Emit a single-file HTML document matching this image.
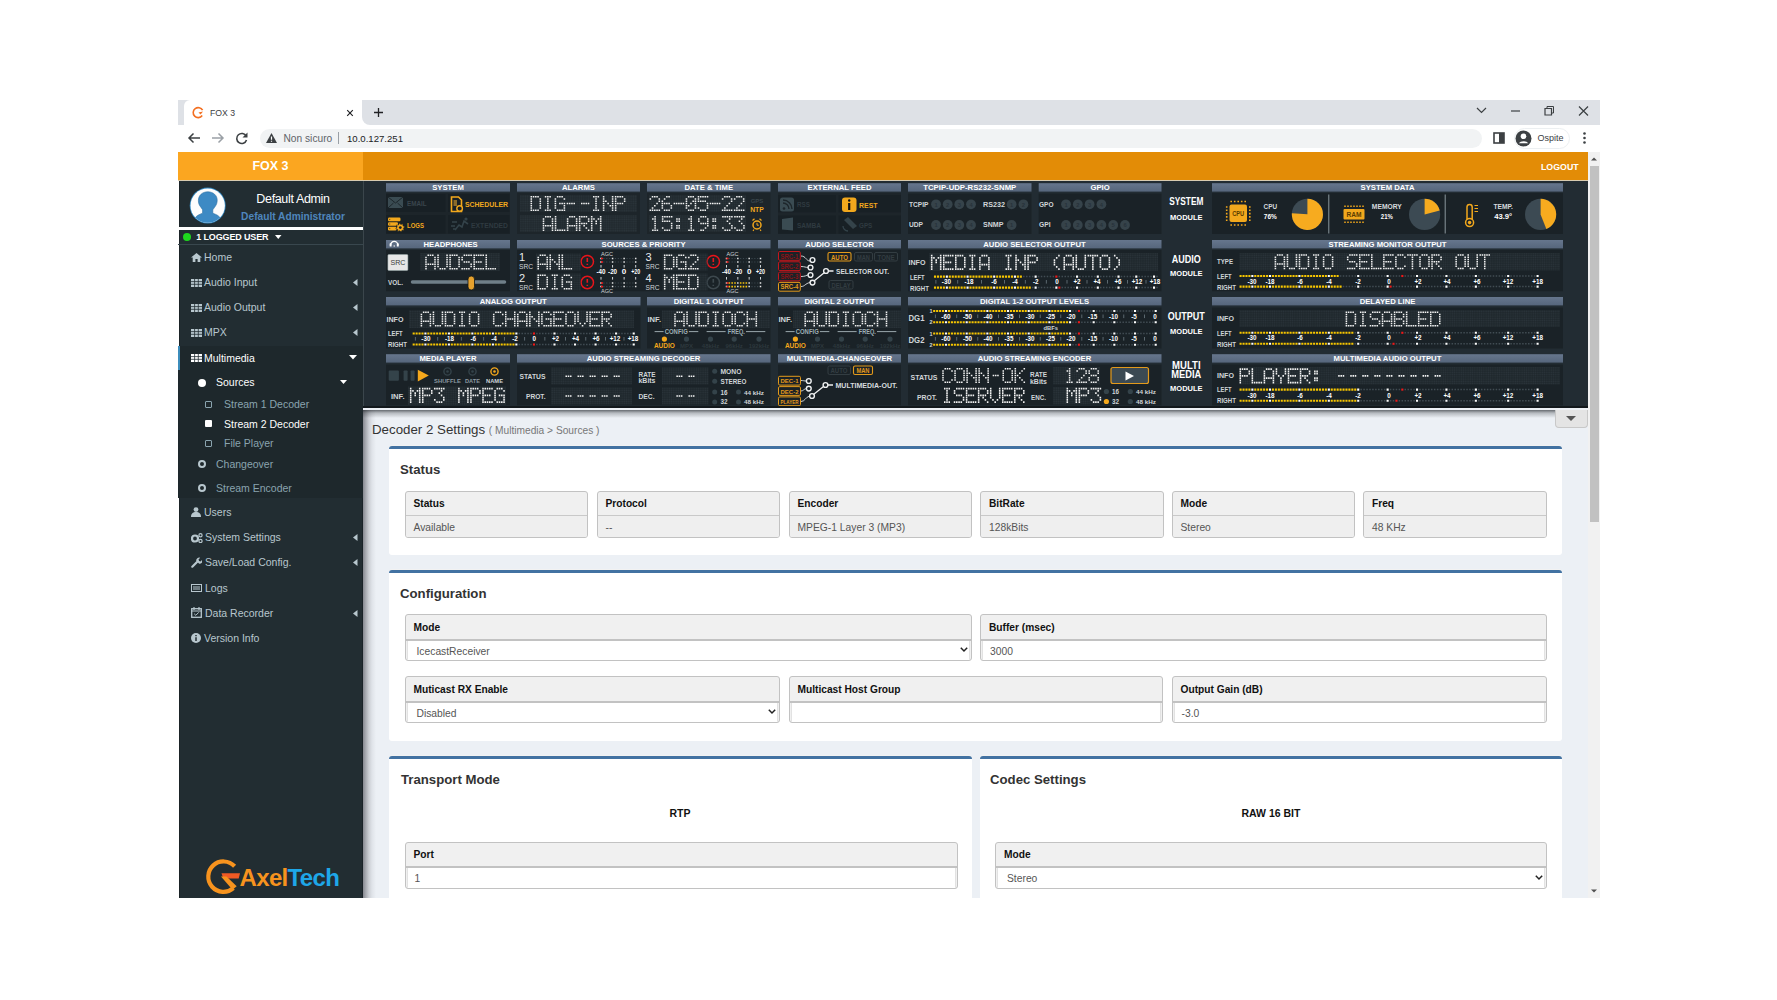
<!DOCTYPE html><html><head><meta charset="utf-8"><title>FOX 3</title><style>
*{box-sizing:border-box;margin:0;padding:0}
html,body{width:1777px;height:1000px;overflow:hidden;background:#fff;font-family:"Liberation Sans",sans-serif;}
.abs{position:absolute}
#tabs{left:178px;top:100px;width:1422px;height:25px;background:#dee1e6}
#tab{left:184px;top:100px;width:178px;height:25px;background:#fff;border-radius:6px 0 0 0}
#toolbar{left:178px;top:125px;width:1422px;height:27px;background:#fff}
#omni{left:260px;top:129px;width:1222px;height:19px;background:#f1f3f4;border-radius:10px}
.chrome-t{font-size:10px;color:#202124;white-space:nowrap}
#logo{left:178px;top:152px;width:185px;height:28px;background:#fba620;color:#fff;font-size:12.5px;text-align:center;line-height:28px}
#nav{left:363px;top:152px;width:1225px;height:28px;background:#e38c06}
#side{left:178.5px;top:180px;width:184.5px;height:718px;background:#222d32;border-left:1.5px solid #1b2327}
#dash{left:363px;top:180px;width:1225px;height:228px;background:#222c33}
#content{left:363px;top:408px;width:1225px;height:490px;background:#ecf0f5}
#scroll{left:1588px;top:152px;width:12px;height:746px;background:#f1f1f1}
.menu{color:#b8c7ce;font-size:10.5px;white-space:nowrap}
.card{background:#fff;border-top:3px solid #4272a2;border-radius:3px;box-shadow:0 -1px 0 #f2f2f2}
.ctitle{font-size:13.2px;font-weight:bold;color:#333;white-space:nowrap}
.fg{border:1px solid #c2c2c2;border-radius:3px;background:#f0f0f0;overflow:hidden}
.fl{height:23px;line-height:23px;font-size:10.2px;font-weight:bold;color:#111;padding-left:8px;border-bottom:1px solid #c9c9c9}
.fv{height:22px;line-height:22px;font-size:10.3px;color:#555;padding-left:8px;background:#efefef}
.fv.w{background:#fff}
</style></head><body><div class="abs" id="tabs"></div><div class="abs" id="tab"></div><div class="abs" id="toolbar"></div><div class="abs" id="omni"></div><svg class="abs" style="left:192px;top:106px" width="13" height="13" viewBox="0 0 13 13"><path d="M10.6 4.2 A5 5 0 1 0 10.2 9.6" fill="none" stroke="#f36f21" stroke-width="1.6"/><path d="M6.5 6.6 L11 5.6 L8.6 8.6Z" fill="#f36f21"/></svg><div class="abs chrome-t" style="left:210px;top:107.5px;font-size:8.7px;color:#3c4043">FOX 3</div><svg class="abs" style="left:345.5px;top:108.5px" width="8" height="8"><path d="M1.2 1.2l5.6 5.6M6.8 1.2l-5.6 5.6" stroke="#202124" stroke-width="1.15"/></svg><div class="abs" style="left:362px;top:115px;width:8px;height:10px;background:#fff"></div><div class="abs" style="left:362px;top:100px;width:12px;height:25px;background:#dee1e6;border-radius:0 0 0 8px"></div><div class="abs" style="left:362px;top:100px;width:6px;height:6px;background:#dee1e6"></div><svg class="abs" style="left:372.5px;top:107px" width="11" height="11"><path d="M5.5 1v9M1 5.5h9" stroke="#202124" stroke-width="1.3"/></svg><svg class="abs" style="left:1475px;top:105px" width="120" height="12"><path d="M2 3l4.5 4.5L11 3" fill="none" stroke="#3c4043" stroke-width="1.2"/><path d="M36 6h9" stroke="#3c4043" stroke-width="1.2"/><path d="M70 3.5h6.5v6.5h-6.5z" fill="none" stroke="#3c4043" stroke-width="1.2"/><path d="M72 3.5v-2h6.5v6.5h-2" fill="none" stroke="#3c4043" stroke-width="1"/><path d="M104 1.5l9 9M113 1.5l-9 9" stroke="#3c4043" stroke-width="1.2"/></svg><svg class="abs" style="left:186px;top:131px" width="64" height="14"><path d="M14 7H3M7.5 2.5L3 7l4.5 4.5" fill="none" stroke="#3c4043" stroke-width="1.5"/><path d="M26 7h11M32.5 2.5L37 7l-4.5 4.5" fill="none" stroke="#9aa0a6" stroke-width="1.5"/><path d="M60.2 5.2A5 5 0 1 0 60.5 9" fill="none" stroke="#3c4043" stroke-width="1.6"/><path d="M61.5 1.5v5h-5z" fill="#3c4043"/></svg><svg class="abs" style="left:265px;top:132px" width="13" height="12"><path d="M6.5 1L12 11H1z" fill="#3c4043"/><path d="M6.5 4.5v3.3M6.5 8.8v1" stroke="#fff" stroke-width="1.2"/></svg><div class="abs chrome-t" style="left:283.5px;top:133px;font-size:10.2px;color:#5f6368">Non sicuro</div><div class="abs" style="left:338px;top:132px;width:1px;height:12px;background:#9aa0a6"></div><div class="abs chrome-t" style="left:347px;top:133px;font-size:9.6px">10.0.127.251</div><svg class="abs" style="left:1493px;top:132px" width="12" height="12"><rect x="1" y="1" width="10" height="10" fill="none" stroke="#3c4043" stroke-width="1.6"/><rect x="6" y="1" width="5" height="10" fill="#3c4043"/></svg><div class="abs" style="left:1514px;top:128px;width:56px;height:21px;border-radius:11px;background:#fff;border:1px solid #eceff1"></div><svg class="abs" style="left:1515px;top:130px" width="17" height="17"><circle cx="8.5" cy="8.5" r="8" fill="#3c4043"/><circle cx="8.5" cy="6.3" r="2.8" fill="#fff"/><path d="M3.7 13.2a5.5 4 0 0 1 9.6 0" fill="#fff"/></svg><div class="abs chrome-t" style="left:1537.5px;top:133px;font-size:9px;color:#3c4043">Ospite</div><svg class="abs" style="left:1582px;top:131px" width="5" height="14"><circle cx="2.5" cy="2.5" r="1.3" fill="#3c4043"/><circle cx="2.5" cy="7" r="1.3" fill="#3c4043"/><circle cx="2.5" cy="11.5" r="1.3" fill="#3c4043"/></svg><div class="abs" id="logo"><b>FOX 3</b></div><div class="abs" id="nav"></div><div class="abs" style="left:1541px;top:161.5px;font-size:8.8px;font-weight:bold;color:#fff">LOGOUT</div><div class="abs" id="scroll"></div><div class="abs" style="left:1590px;top:166px;width:9px;height:356px;background:#c1c1c1"></div><svg class="abs" style="left:1589px;top:154px" width="10" height="10"><path d="M2 6.5l3-3 3 3z" fill="#505050"/></svg><svg class="abs" style="left:1589px;top:886px" width="10" height="10"><path d="M2 3.5l3 3 3-3z" fill="#505050"/></svg><div class="abs" id="side"></div><div class="abs" style="left:361.5px;top:408px;width:1.5px;height:490px;background:#1a2328"></div><div class="abs" style="left:178px;top:227px;width:185px;height:3px;background:#fff"></div><svg class="abs" style="left:188px;top:186px" width="40" height="40" viewBox="188 186 40 40"><defs><clipPath id="avc"><circle cx="207.7" cy="205.6" r="17.2"/></clipPath></defs><circle cx="207.7" cy="205.6" r="18" fill="#2f86c0"/><circle cx="207.7" cy="205.6" r="17.2" fill="#fdfdfd"/><g clip-path="url(#avc)" fill="#3d8ac4" stroke="#2a6fa3" stroke-width="0.6"><path d="M207.8 191.8c-5.4 0-9.4 3.6-9.4 8.6 0 2.4 0.6 4.2 1.6 5.6 0.9 1.3 1.9 2.6 2.6 3.8v3.4c-3.2 1.2-6.6 2.6-8.2 5.6l-1 8h28.6l-1-8c-1.6-3-5-4.4-8.2-5.6v-3.4c0.8-1.2 1.9-2.6 2.8-4 1-1.5 1.6-3.4 1.6-5.6 0-4.8-3.9-8.4-9.4-8.4z"/></g></svg><div class="abs" style="left:238px;top:191.5px;width:110px;text-align:center;font-size:12.5px;letter-spacing:-0.35px;color:#fff">Default Admin</div><div class="abs" style="left:228px;top:210.5px;width:130px;text-align:center;font-size:10.2px;font-weight:bold;color:#4f86bd">Default Administrator</div><div class="abs" style="left:178px;top:244px;width:185px;height:1px;background:#39474e"></div><div class="abs" style="left:183px;top:233px;width:8px;height:8px;border-radius:50%;background:#1ed71e"></div><div class="abs" style="left:196.3px;top:231.7px;font-size:9px;font-weight:bold;letter-spacing:-0.15px;color:#fff;white-space:nowrap">1 LOGGED USER</div><svg class="abs" style="left:274.5px;top:235px" width="8" height="5"><path d="M0 0h6.5L3.25 4z" fill="#fff"/></svg><svg class="abs" style="left:191px;top:252.5px" width="11" height="9"><path d="M5.5 0L11 4.6H9.3V9H6.6V6H4.4v3H1.7V4.6H0z" fill="#b8c7ce"/></svg><div class="abs menu" style="left:204px;top:251.0px">Home</div><svg class="abs" style="left:191px;top:278.5px" width="11" height="8"><path d="M0 0h11v8H0z" fill="#b8c7ce"/><path d="M0 2.6h11M0 5.3h11M3.6 0v8M7.3 0v8" stroke="#222d32" stroke-width="0.8"/></svg><div class="abs menu" style="left:204px;top:276.0px">Audio Input</div><svg class="abs" style="left:353px;top:279.0px" width="5" height="7"><path d="M4.5 0v7L0 3.5z" fill="#b8c7ce"/></svg><svg class="abs" style="left:191px;top:303.5px" width="11" height="8"><path d="M0 0h11v8H0z" fill="#b8c7ce"/><path d="M0 2.6h11M0 5.3h11M3.6 0v8M7.3 0v8" stroke="#222d32" stroke-width="0.8"/></svg><div class="abs menu" style="left:204px;top:301.0px">Audio Output</div><svg class="abs" style="left:353px;top:304.0px" width="5" height="7"><path d="M4.5 0v7L0 3.5z" fill="#b8c7ce"/></svg><svg class="abs" style="left:191px;top:328.5px" width="11" height="8"><path d="M0 0h11v8H0z" fill="#b8c7ce"/><path d="M0 2.6h11M0 5.3h11M3.6 0v8M7.3 0v8" stroke="#222d32" stroke-width="0.8"/></svg><div class="abs menu" style="left:204px;top:326.0px">MPX</div><svg class="abs" style="left:353px;top:329.0px" width="5" height="7"><path d="M4.5 0v7L0 3.5z" fill="#b8c7ce"/></svg><div class="abs" style="left:178px;top:346px;width:185px;height:152px;background:#1e282c"></div><div class="abs" style="left:178px;top:346px;width:2px;height:24px;background:#3c8dbc"></div><svg class="abs" style="left:191px;top:354px" width="11" height="8"><path d="M0 0h11v8H0z" fill="#fff"/><path d="M0 2.6h11M0 5.3h11M3.6 0v8M7.3 0v8" stroke="#222d32" stroke-width="0.8"/></svg><div class="abs menu" style="left:204px;top:351.5px;color:#fff">Multimedia</div><svg class="abs" style="left:349px;top:355px" width="8" height="5"><path d="M0 0h8L4 4.5z" fill="#fff"/></svg><div class="abs" style="left:198px;top:378.5px;width:8px;height:8px;border-radius:50%;background:#fff"></div><div class="abs menu" style="left:216px;top:376px;color:#fff">Sources</div><svg class="abs" style="left:340px;top:380px" width="7" height="4"><path d="M0 0h7L3.5 4z" fill="#fff"/></svg><div class="abs" style="left:205px;top:400.5px;width:7px;height:7px;border:1px solid #8aa4af;border-radius:1px"></div><div class="abs menu" style="left:224px;top:398px;font-size:10.5px;color:#8aa4af">Stream 1 Decoder</div><div class="abs" style="left:205px;top:420.0px;width:7px;height:7px;background:#fff;border-radius:1px"></div><div class="abs menu" style="left:224px;top:417.5px;font-size:10.5px;color:#fff">Stream 2 Decoder</div><div class="abs" style="left:205px;top:439.5px;width:7px;height:7px;border:1px solid #8aa4af;border-radius:1px"></div><div class="abs menu" style="left:224px;top:437px;font-size:10.5px;color:#8aa4af">File Player</div><div class="abs" style="left:198px;top:460px;width:8px;height:8px;border-radius:50%;border:2px solid #b8c7ce"></div><div class="abs menu" style="left:216px;top:457.5px;color:#8aa4af">Changeover</div><div class="abs" style="left:198px;top:484px;width:8px;height:8px;border-radius:50%;border:2px solid #b8c7ce"></div><div class="abs menu" style="left:216px;top:481.5px;color:#8aa4af">Stream Encoder</div><svg class="abs" style="left:191px;top:507px" width="10" height="10"><circle cx="5" cy="2.6" r="2.4" fill="#b8c7ce"/><path d="M0 10c0-3.5 1.8-5 5-5s5 1.5 5 5z" fill="#b8c7ce"/></svg><div class="abs menu" style="left:204px;top:505.5px">Users</div><svg class="abs" style="left:191px;top:532.5px" width="12" height="10"><circle cx="4" cy="5.5" r="3" fill="none" stroke="#b8c7ce" stroke-width="2.2"/><circle cx="9.5" cy="2.3" r="1.6" fill="none" stroke="#b8c7ce" stroke-width="1.2"/><circle cx="9.5" cy="8" r="1.6" fill="none" stroke="#b8c7ce" stroke-width="1.2"/></svg><div class="abs menu" style="left:205px;top:531.0px">System Settings</div><svg class="abs" style="left:353px;top:534.0px" width="5" height="7"><path d="M4.5 0v7L0 3.5z" fill="#b8c7ce"/></svg><svg class="abs" style="left:191px;top:557.0px" width="11" height="11"><path d="M1.3 9.7L6 5" stroke="#b8c7ce" stroke-width="2.2" stroke-linecap="round"/><path d="M5.2 3.8a3 3 0 0 1 4-3.1L7.5 2.5l0.6 1.4 1.4 0.6 1.8-1.7a3 3 0 0 1-3.1 4z" fill="#b8c7ce"/></svg><div class="abs menu" style="left:205px;top:556.0px">Save/Load Config.</div><svg class="abs" style="left:353px;top:559.0px" width="5" height="7"><path d="M4.5 0v7L0 3.5z" fill="#b8c7ce"/></svg><svg class="abs" style="left:191px;top:584px" width="11" height="8"><rect x="0.5" y="0.5" width="10" height="7" fill="none" stroke="#b8c7ce"/><rect x="2" y="2" width="7" height="4" fill="#b8c7ce" opacity="0.5"/></svg><div class="abs menu" style="left:205px;top:581.5px">Logs</div><svg class="abs" style="left:191px;top:607px" width="11" height="11"><rect x="0.7" y="1.7" width="9.6" height="8.6" fill="none" stroke="#b8c7ce" stroke-width="1.3"/><path d="M0.7 4h9.6M3 0v3M8 0v3" stroke="#b8c7ce" stroke-width="1.2"/><path d="M3.2 6.8l1.6 1.5 3-3" fill="none" stroke="#b8c7ce" stroke-width="1"/></svg><div class="abs menu" style="left:205px;top:606.5px">Data Recorder</div><svg class="abs" style="left:353px;top:609.5px" width="5" height="7"><path d="M4.5 0v7L0 3.5z" fill="#b8c7ce"/></svg><svg class="abs" style="left:191px;top:633px" width="10" height="10"><circle cx="5" cy="5" r="5" fill="#b8c7ce"/><path d="M5 4.3v3.8M5 2v1.2" stroke="#222d32" stroke-width="1.5"/></svg><div class="abs menu" style="left:204px;top:631.5px">Version Info</div><svg class="abs" style="left:200px;top:855px" width="45" height="42" viewBox="200 855 45 42"><path d="M234.6 866.3A15.2 15.2 0 1 0 233.4 888.2" fill="none" stroke="#f7931e" stroke-width="4.2"/><path d="M221.5 873.2h18.5l-1.3 5.3h-15.4z" fill="#f15a24"/><path d="M221 876.5h5.5l10.2 9.8-4.2 3.4z" fill="#f7931e"/></svg><div class="abs" style="left:239.5px;top:863.5px;font-size:24px;line-height:28px;font-weight:bold;letter-spacing:-0.65px;white-space:nowrap"><span style="color:#f7931e">Axel</span><span style="color:#1ea7e8">Tech</span></div><div class="abs" id="dash"></div><div class="abs" style="left:362.5px;top:180px;width:1px;height:228px;background:#3b464c"></div><div class="abs" style="left:178px;top:179.5px;width:1410px;height:1px;background:#d8cbb0"></div><svg class="abs" style="left:363px;top:180px" width="1225" height="228" viewBox="363 180 1225 228" font-family="Liberation Sans, sans-serif"><style>.tt{font-size:7.7px;font-weight:bold;fill:#fff}</style><defs><linearGradient id="tg" x1="0" y1="0" x2="0" y2="1"><stop offset="0" stop-color="#66768d"/><stop offset="1" stop-color="#56667c"/></linearGradient><pattern id="lg" x="0" y="0" width="2.25" height="2.25" patternUnits="userSpaceOnUse"><rect x="0.3" y="0.3" width="1.6" height="1.6" fill="#2b353b"/></pattern></defs><rect x="386" y="183.2" width="124" height="8.4" fill="url(#tg)"/><text x="448" y="190.2" text-anchor="middle" class="tt">SYSTEM</text><rect x="386" y="193" width="124" height="41" fill="#1d252a"/><rect x="386" y="194" width="59.5" height="18" fill="#182025"/><rect x="448" y="194" width="61.5" height="18" fill="#182025"/><rect x="386" y="215" width="59.5" height="18.5" fill="#182025"/><rect x="448" y="215" width="61.5" height="18.5" fill="#182025"/><g fill="#3a4b52"><rect x="388" y="197" width="15" height="11"/></g><path d="M388 197l7.5 6 7.5-6M388 208l5.5-5M403 208l-5.5-5" stroke="#1d262b" stroke-width="1" fill="none"/><text x="407" y="206" font-size="6.3" fill="#3a454c" font-weight="bold" text-anchor="start">EMAIL</text><path d="M451.5 197h7l3 3v11.5h-10z" fill="none" stroke="#f2a81d" stroke-width="1.6"/><circle cx="459.6" cy="208.5" r="2.8" fill="#182025" stroke="#f2a81d" stroke-width="1.4"/><rect x="453.5" y="200" width="3.5" height="6" fill="#8a6a2a"/><text x="465" y="206.5" font-size="6.8" fill="#f2a81d" font-weight="bold" text-anchor="start" textLength="43" lengthAdjust="spacingAndGlyphs">SCHEDULER</text><g fill="#f2a81d"><rect x="388" y="217.6" width="12.5" height="3.6" rx="1.2"/><rect x="388" y="222.2" width="10" height="3.6" rx="1.2"/><rect x="388" y="226.8" width="8.5" height="3.6" rx="1.2"/></g><path d="M389.8 219.4h0M389.8 224h0M389.8 228.6h0" stroke="#182025" stroke-width="1" stroke-linecap="round"/><path d="M404.81 226.70L403.44 228.22L404.12 230.16L402.08 230.26L401.20 232.11L399.68 230.74L397.74 231.42L397.64 229.38L395.79 228.50L397.16 226.98L396.48 225.04L398.52 224.94L399.40 223.09L400.92 224.46L402.86 223.78L402.96 225.82Z" fill="#f2a81d" stroke="#182025" stroke-width="0.6"/><circle cx="400.3" cy="227.6" r="1.4" fill="#182025"/><text x="407" y="227.5" font-size="6.8" fill="#f2a81d" font-weight="bold" text-anchor="start" textLength="17" lengthAdjust="spacingAndGlyphs">LOGS</text><path d="M455 230l4-5 3 2 2-6 4 3M452 222h5M451 226h4M453 229h3" stroke="#34434a" stroke-width="1.6" fill="none"/><circle cx="466" cy="219" r="1.6" fill="#34434a"/><text x="471" y="227.5" font-size="6.3" fill="#2f3a40" font-weight="bold" text-anchor="start" textLength="37" lengthAdjust="spacingAndGlyphs">EXTENDED</text><rect x="517" y="183.2" width="123" height="8.4" fill="url(#tg)"/><text x="578.5" y="190.2" text-anchor="middle" class="tt">ALARMS</text><rect x="517" y="193" width="123" height="41" fill="#1d252a"/><rect x="647" y="183.2" width="123.5" height="8.4" fill="url(#tg)"/><text x="708.75" y="190.2" text-anchor="middle" class="tt">DATE &amp; TIME</text><rect x="647" y="193" width="123.5" height="41" fill="#1d252a"/><text x="757" y="203" font-size="6" fill="#3a454c" font-weight="bold" text-anchor="middle">GPS</text><text x="757" y="211.5" font-size="6.8" fill="#f2a81d" font-weight="bold" text-anchor="middle">NTP</text><circle cx="757" cy="225" r="4" fill="none" stroke="#f2a81d" stroke-width="1.5"/><path d="M757 222.8v2.4h1.8" stroke="#f2a81d" stroke-width="1" fill="none"/><path d="M752.5 220.5l2-1.8M761.5 220.5l-2-1.8M754 229.5l-1 1.3M760 229.5l1 1.3" stroke="#f2a81d" stroke-width="1.2"/><rect x="778" y="183.2" width="123" height="8.4" fill="url(#tg)"/><text x="839.5" y="190.2" text-anchor="middle" class="tt">EXTERNAL FEED</text><rect x="778" y="193" width="123" height="41" fill="#1d252a"/><rect x="778" y="195" width="58" height="17.30000000000001" fill="#182025"/><rect x="838.6" y="195" width="62.39999999999998" height="17.30000000000001" fill="#182025"/><rect x="778" y="215.5" width="58" height="18.099999999999994" fill="#182025"/><rect x="838.6" y="215.5" width="62.39999999999998" height="18.099999999999994" fill="#182025"/><rect x="780" y="197.5" width="14" height="14" rx="2.5" fill="#3a4b52"/><path d="M783 203a6 6 0 0 1 6 6M783 200a9 9 0 0 1 9 9" stroke="#1d262b" stroke-width="1.4" fill="none"/><circle cx="784" cy="208.5" r="1.3" fill="#1d262b"/><text x="797" y="207" font-size="6.3" fill="#2f3a40" font-weight="bold" text-anchor="start">RSS</text><rect x="842" y="197.5" width="14.5" height="14.5" rx="3" fill="#f2a81d"/><path d="M849.2 203v7" stroke="#111" stroke-width="2.2"/><circle cx="849.2" cy="200.5" r="1.2" fill="#111"/><text x="859" y="207.5" font-size="6.8" fill="#f2a81d" font-weight="bold" text-anchor="start" textLength="18.5" lengthAdjust="spacingAndGlyphs">REST</text><path d="M782 219l11 -1.5v13l-11-1z" fill="#3a4b52"/><text x="797" y="228" font-size="6.3" fill="#2f3a40" font-weight="bold" text-anchor="start" textLength="24" lengthAdjust="spacingAndGlyphs">SAMBA</text><path d="M844 220l4-3 9 9-4 3z" fill="#34434a"/><path d="M843 226a5 5 0 0 0 5 5" stroke="#34434a" stroke-width="1.3" fill="none"/><text x="859" y="228" font-size="6.3" fill="#2f3a40" font-weight="bold" text-anchor="start">GPS</text><rect x="908" y="183.2" width="123.5" height="8.4" fill="url(#tg)"/><text x="969.75" y="190.2" text-anchor="middle" class="tt" textLength="93" lengthAdjust="spacingAndGlyphs">TCPIP-UDP-RS232-SNMP</text><rect x="908" y="193.5" width="123.5" height="40.5" fill="#1a2227"/><text x="909" y="206.5" font-size="6.6" fill="#d0d5d8" font-weight="bold" text-anchor="start" textLength="19.5" lengthAdjust="spacingAndGlyphs">TCPIP</text><text x="909" y="227.3" font-size="6.6" fill="#d0d5d8" font-weight="bold" text-anchor="start" textLength="14" lengthAdjust="spacingAndGlyphs">UDP</text><text x="983" y="206.5" font-size="6.6" fill="#d0d5d8" font-weight="bold" text-anchor="start" textLength="22" lengthAdjust="spacingAndGlyphs">RS232</text><text x="983" y="227.3" font-size="6.6" fill="#d0d5d8" font-weight="bold" text-anchor="start" textLength="20.5" lengthAdjust="spacingAndGlyphs">SNMP</text><circle cx="936" cy="204.3" r="4.9" fill="#36434a"/><text x="936" y="206.5" font-size="5.8" fill="#27323a" font-weight="bold" text-anchor="middle">1</text><circle cx="947.7" cy="204.3" r="4.9" fill="#36434a"/><text x="947.7" y="206.5" font-size="5.8" fill="#27323a" font-weight="bold" text-anchor="middle">2</text><circle cx="959.3" cy="204.3" r="4.9" fill="#36434a"/><text x="959.3" y="206.5" font-size="5.8" fill="#27323a" font-weight="bold" text-anchor="middle">3</text><circle cx="971" cy="204.3" r="4.9" fill="#36434a"/><text x="971" y="206.5" font-size="5.8" fill="#27323a" font-weight="bold" text-anchor="middle">4</text><circle cx="936" cy="225" r="4.9" fill="#36434a"/><text x="936" y="227.2" font-size="5.8" fill="#27323a" font-weight="bold" text-anchor="middle">1</text><circle cx="947.7" cy="225" r="4.9" fill="#36434a"/><text x="947.7" y="227.2" font-size="5.8" fill="#27323a" font-weight="bold" text-anchor="middle">2</text><circle cx="959.3" cy="225" r="4.9" fill="#36434a"/><text x="959.3" y="227.2" font-size="5.8" fill="#27323a" font-weight="bold" text-anchor="middle">3</text><circle cx="971" cy="225" r="4.9" fill="#36434a"/><text x="971" y="227.2" font-size="5.8" fill="#27323a" font-weight="bold" text-anchor="middle">4</text><circle cx="1011.6" cy="204.3" r="4.9" fill="#36434a"/><text x="1011.6" y="206.5" font-size="5.8" fill="#27323a" font-weight="bold" text-anchor="middle">1</text><circle cx="1023.4" cy="204.3" r="4.9" fill="#36434a"/><text x="1023.4" y="206.5" font-size="5.8" fill="#27323a" font-weight="bold" text-anchor="middle">2</text><circle cx="1011.6" cy="225" r="4.9" fill="#36434a"/><text x="1011.6" y="227.2" font-size="5.8" fill="#27323a" font-weight="bold" text-anchor="middle">1</text><rect x="1038.7" y="183.2" width="122.79999999999995" height="8.4" fill="url(#tg)"/><text x="1100.1" y="190.2" text-anchor="middle" class="tt">GPIO</text><rect x="1038.7" y="193.5" width="122.79999999999995" height="40.5" fill="#1a2227"/><text x="1039" y="206.5" font-size="6.6" fill="#d0d5d8" font-weight="bold" text-anchor="start" textLength="14.5" lengthAdjust="spacingAndGlyphs">GPO</text><text x="1039" y="227.3" font-size="6.6" fill="#d0d5d8" font-weight="bold" text-anchor="start" textLength="11.5" lengthAdjust="spacingAndGlyphs">GPI</text><circle cx="1066" cy="204.3" r="4.9" fill="#36434a"/><text x="1066" y="206.5" font-size="5.8" fill="#27323a" font-weight="bold" text-anchor="middle">1</text><circle cx="1077.8" cy="204.3" r="4.9" fill="#36434a"/><text x="1077.8" y="206.5" font-size="5.8" fill="#27323a" font-weight="bold" text-anchor="middle">2</text><circle cx="1089.6" cy="204.3" r="4.9" fill="#36434a"/><text x="1089.6" y="206.5" font-size="5.8" fill="#27323a" font-weight="bold" text-anchor="middle">3</text><circle cx="1101.4" cy="204.3" r="4.9" fill="#36434a"/><text x="1101.4" y="206.5" font-size="5.8" fill="#27323a" font-weight="bold" text-anchor="middle">4</text><circle cx="1066" cy="225" r="4.9" fill="#36434a"/><text x="1066" y="227.2" font-size="5.8" fill="#27323a" font-weight="bold" text-anchor="middle">1</text><circle cx="1077.8" cy="225" r="4.9" fill="#36434a"/><text x="1077.8" y="227.2" font-size="5.8" fill="#27323a" font-weight="bold" text-anchor="middle">2</text><circle cx="1089.6" cy="225" r="4.9" fill="#36434a"/><text x="1089.6" y="227.2" font-size="5.8" fill="#27323a" font-weight="bold" text-anchor="middle">3</text><circle cx="1101.4" cy="225" r="4.9" fill="#36434a"/><text x="1101.4" y="227.2" font-size="5.8" fill="#27323a" font-weight="bold" text-anchor="middle">4</text><circle cx="1113.2" cy="225" r="4.9" fill="#36434a"/><text x="1113.2" y="227.2" font-size="5.8" fill="#27323a" font-weight="bold" text-anchor="middle">5</text><circle cx="1125" cy="225" r="4.9" fill="#36434a"/><text x="1125" y="227.2" font-size="5.8" fill="#27323a" font-weight="bold" text-anchor="middle">6</text><text x="1186.3" y="205.3" font-size="10" fill="#fff" font-weight="bold" text-anchor="middle" textLength="34" lengthAdjust="spacingAndGlyphs">SYSTEM</text><text x="1186.3" y="219.5" font-size="8" fill="#fff" font-weight="bold" text-anchor="middle" textLength="32.5" lengthAdjust="spacingAndGlyphs">MODULE</text><text x="1186.3" y="262.6" font-size="10" fill="#fff" font-weight="bold" text-anchor="middle" textLength="29" lengthAdjust="spacingAndGlyphs">AUDIO</text><text x="1186.3" y="276.4" font-size="8" fill="#fff" font-weight="bold" text-anchor="middle" textLength="32.5" lengthAdjust="spacingAndGlyphs">MODULE</text><text x="1186.3" y="319.6" font-size="10" fill="#fff" font-weight="bold" text-anchor="middle" textLength="37" lengthAdjust="spacingAndGlyphs">OUTPUT</text><text x="1186.3" y="333.5" font-size="8" fill="#fff" font-weight="bold" text-anchor="middle" textLength="32.5" lengthAdjust="spacingAndGlyphs">MODULE</text><text x="1186.3" y="368.6" font-size="10" fill="#fff" font-weight="bold" text-anchor="middle" textLength="28.5" lengthAdjust="spacingAndGlyphs">MULTI</text><text x="1186.3" y="378" font-size="10" fill="#fff" font-weight="bold" text-anchor="middle" textLength="30" lengthAdjust="spacingAndGlyphs">MEDIA</text><text x="1186.3" y="390.5" font-size="8" fill="#fff" font-weight="bold" text-anchor="middle" textLength="32.5" lengthAdjust="spacingAndGlyphs">MODULE</text><rect x="1212" y="183.2" width="351" height="8.4" fill="url(#tg)"/><text x="1387.5" y="190.2" text-anchor="middle" class="tt">SYSTEM DATA</text><rect x="1212" y="193" width="351" height="41" fill="#1a2227"/><path d="M1328.8 194.5v39M1445.2 194.5v39" stroke="#8a979d" stroke-width="1"/><rect x="1229.5" y="204.5" width="17.5" height="17.5" rx="2" fill="#f2a81d"/><path d="M1231.2 201.5h0M1231.2 225h0M1226.7 207h0M1249.8 207h0M1234.7 201.5h0M1234.7 225h0M1226.7 210.3h0M1249.8 210.3h0M1238.2 201.5h0M1238.2 225h0M1226.7 213.6h0M1249.8 213.6h0M1241.7 201.5h0M1241.7 225h0M1226.7 216.9h0M1249.8 216.9h0M1245.2 201.5h0M1245.2 225h0M1226.7 220.2h0M1249.8 220.2h0" stroke="#f2a81d" stroke-width="1.6" stroke-linecap="square"/><text x="1238.2" y="215.8" font-size="6.3" fill="#5a3b00" font-weight="bold" text-anchor="middle" textLength="12" lengthAdjust="spacingAndGlyphs">CPU</text><text x="1270.3" y="209" font-size="6.8" fill="#d6dbde" font-weight="bold" text-anchor="middle" textLength="13.5" lengthAdjust="spacingAndGlyphs">CPU</text><text x="1270.3" y="219" font-size="6.8" fill="#fff" font-weight="bold" text-anchor="middle" textLength="13" lengthAdjust="spacingAndGlyphs">76%</text><rect x="1343.5" y="209" width="21" height="10.5" rx="1" fill="#f2a81d"/><path d="M1345 206.3h0M1345 222.2h0M1348 206.3h0M1348 222.2h0M1351 206.3h0M1351 222.2h0M1354 206.3h0M1354 222.2h0M1357 206.3h0M1357 222.2h0M1360 206.3h0M1360 222.2h0M1363 206.3h0M1363 222.2h0" stroke="#f2a81d" stroke-width="1.5" stroke-linecap="square"/><text x="1354" y="217" font-size="6.5" fill="#5a3b00" font-weight="bold" text-anchor="middle" textLength="15" lengthAdjust="spacingAndGlyphs">RAM</text><text x="1386.8" y="209" font-size="6.8" fill="#d6dbde" font-weight="bold" text-anchor="middle" textLength="30" lengthAdjust="spacingAndGlyphs">MEMORY</text><text x="1386.8" y="219" font-size="6.8" fill="#fff" font-weight="bold" text-anchor="middle" textLength="12" lengthAdjust="spacingAndGlyphs">21%</text><path d="M1467 219.5v-12.5a2.6 2.6 0 0 1 5.2 0v12.5" fill="none" stroke="#f2a81d" stroke-width="1.5"/><circle cx="1469.6" cy="222.6" r="4" fill="none" stroke="#f2a81d" stroke-width="1.5"/><circle cx="1469.6" cy="222.6" r="1.8" fill="#f2a81d"/><path d="M1474.5 205.5h3.5M1474.5 208.5h3.5M1474.5 211.5h3.5" stroke="#f2a81d" stroke-width="1"/><text x="1503.2" y="209" font-size="6.8" fill="#d6dbde" font-weight="bold" text-anchor="middle" textLength="19.5" lengthAdjust="spacingAndGlyphs">TEMP.</text><text x="1503.2" y="219" font-size="6.3" fill="#fff" font-weight="bold" text-anchor="middle" textLength="18" lengthAdjust="spacingAndGlyphs">43.9°</text><circle cx="1307.4" cy="214.3" r="15.6" fill="#3c4a53"/><path d="M1307.4 214.3L1307.4 198.7A15.6 15.6 0 1 1 1291.83 213.32Z" fill="#f7ab1f"/><circle cx="1424.6" cy="214.4" r="15.6" fill="#3c4a53"/><path d="M1424.6 214.4L1424.6 198.8A15.6 15.6 0 0 1 1439.71 210.52Z" fill="#f7ab1f"/><circle cx="1540.6" cy="214.4" r="15.6" fill="#3c4a53"/><path d="M1540.6 214.4L1540.6 198.8A15.6 15.6 0 0 1 1546.34 228.9Z" fill="#f7ab1f"/><rect x="386" y="240" width="124" height="8.4" fill="url(#tg)"/><text x="450.6" y="247" text-anchor="middle" class="tt">HEADPHONES</text><rect x="386" y="250" width="124" height="41.19999999999999" fill="#1a2227"/><path d="M390.6 245a3.6 3.6 0 0 1 7.2 0" fill="none" stroke="#fff" stroke-width="1.3"/><rect x="389.6" y="243.3" width="2" height="3.2" rx="0.6" fill="#fff"/><rect x="396.8" y="243.3" width="2" height="3.2" rx="0.6" fill="#fff"/><path d="M394.2 245.2v1.6" stroke="#fff" stroke-width="0.9"/><rect x="387.9" y="254.5" width="20" height="16" rx="1" fill="#e6e6e6" stroke="#9aa" stroke-width="0.5"/><text x="397.9" y="265" font-size="7" fill="#3b3b3b" font-weight="normal" text-anchor="middle" textLength="15" lengthAdjust="spacingAndGlyphs">SRC</text><text x="388" y="285" font-size="6.8" fill="#d0d5d8" font-weight="bold" text-anchor="start" textLength="15" lengthAdjust="spacingAndGlyphs">VOL.</text><path d="M412.5 282h92" stroke="#6f7f88" stroke-width="3.5" stroke-linecap="round"/><rect x="468" y="276" width="6.5" height="14" rx="3.2" fill="#e6a22e" stroke="#0f1518" stroke-width="0.8"/><rect x="517" y="240" width="253.5" height="8.4" fill="url(#tg)"/><text x="643.6" y="247" text-anchor="middle" class="tt">SOURCES &amp; PRIORITY</text><rect x="517" y="250" width="253.5" height="41.19999999999999" fill="#1a2227"/><text x="519" y="261" font-size="11" fill="#e8eaec" font-weight="normal" text-anchor="start">1</text><text x="519" y="268.5" font-size="6.3" fill="#d0d5d8" font-weight="normal" text-anchor="start" textLength="14" lengthAdjust="spacingAndGlyphs">SRC</text><text x="519" y="282" font-size="11" fill="#e8eaec" font-weight="normal" text-anchor="start">2</text><text x="519" y="289.5" font-size="6.3" fill="#d0d5d8" font-weight="normal" text-anchor="start" textLength="14" lengthAdjust="spacingAndGlyphs">SRC</text><text x="645.5" y="261" font-size="11" fill="#e8eaec" font-weight="normal" text-anchor="start">3</text><text x="645.5" y="268.5" font-size="6.3" fill="#d0d5d8" font-weight="normal" text-anchor="start" textLength="14" lengthAdjust="spacingAndGlyphs">SRC</text><text x="645.5" y="282" font-size="11" fill="#e8eaec" font-weight="normal" text-anchor="start">4</text><text x="645.5" y="289.5" font-size="6.3" fill="#d0d5d8" font-weight="normal" text-anchor="start" textLength="14" lengthAdjust="spacingAndGlyphs">SRC</text><circle cx="587.3" cy="261.6" r="6.2" fill="none" stroke="#e8151b" stroke-width="1.5"/><path d="M587.3 258.1v3.8M587.3 263.8v1.3" stroke="#e8151b" stroke-width="1.6"/><circle cx="587.3" cy="282.5" r="6.2" fill="none" stroke="#e8151b" stroke-width="1.5"/><path d="M587.3 279.0v3.8M587.3 284.7v1.3" stroke="#e8151b" stroke-width="1.6"/><circle cx="713.3" cy="261.6" r="6.2" fill="none" stroke="#e8151b" stroke-width="1.5"/><path d="M713.3 258.1v3.8M713.3 263.8v1.3" stroke="#e8151b" stroke-width="1.6"/><circle cx="713.3" cy="282.5" r="6.2" fill="none" stroke="#3d484e" stroke-width="1.5"/><path d="M713.3 279.0v3.8M713.3 284.7v1.3" stroke="#3d484e" stroke-width="1.6"/><text x="607" y="256" font-size="5.2" fill="#cfd4d7" font-weight="normal" text-anchor="middle" textLength="12" lengthAdjust="spacingAndGlyphs">AGC</text><text x="607" y="293" font-size="5.2" fill="#cfd4d7" font-weight="normal" text-anchor="middle" textLength="12" lengthAdjust="spacingAndGlyphs">AGC</text><path d="M603.89 258.5h0M606.78 258.5h0M609.67 258.5h0M615.46 258.5h0M618.35 258.5h0M621.24 258.5h0M627.03 258.5h0M629.92 258.5h0M632.81 258.5h0" stroke="#3b474e" stroke-width="1.2" stroke-linecap="square"/><path d="M601 258.5h0M612.57 258.5h0M624.13 258.5h0M635.7 258.5h0" stroke="#e8e8e8" stroke-width="1.5" stroke-linecap="square"/><path d="M601 258.5h2" stroke="#f01818" stroke-width="1.6"/><path d="M603.89 262h0M606.78 262h0M609.67 262h0M615.46 262h0M618.35 262h0M621.24 262h0M627.03 262h0M629.92 262h0M632.81 262h0" stroke="#3b474e" stroke-width="1.2" stroke-linecap="square"/><path d="M601 262h0M612.57 262h0M624.13 262h0M635.7 262h0" stroke="#e8e8e8" stroke-width="1.5" stroke-linecap="square"/><path d="M601 262h2" stroke="#f01818" stroke-width="1.6"/><path d="M603.89 283h0M606.78 283h0M609.67 283h0M615.46 283h0M618.35 283h0M621.24 283h0M627.03 283h0M629.92 283h0M632.81 283h0" stroke="#3b474e" stroke-width="1.2" stroke-linecap="square"/><path d="M601 283h0M612.57 283h0M624.13 283h0M635.7 283h0" stroke="#e8e8e8" stroke-width="1.5" stroke-linecap="square"/><path d="M601 283h2" stroke="#f01818" stroke-width="1.6"/><path d="M603.89 286.6h0M606.78 286.6h0M609.67 286.6h0M615.46 286.6h0M618.35 286.6h0M621.24 286.6h0M627.03 286.6h0M629.92 286.6h0M632.81 286.6h0" stroke="#3b474e" stroke-width="1.2" stroke-linecap="square"/><path d="M601 286.6h0M612.57 286.6h0M624.13 286.6h0M635.7 286.6h0" stroke="#e8e8e8" stroke-width="1.5" stroke-linecap="square"/><path d="M601 286.6h2" stroke="#f01818" stroke-width="1.6"/><path d="M601 265v2.6M601 277v2.6M612.57 265v2.6M612.57 277v2.6M624.13 265v2.6M624.13 277v2.6M635.7 265v2.6M635.7 277v2.6" stroke="#cfd4d7" stroke-width="1"/><text x="601" y="274" font-size="6.3" fill="#fff" font-weight="bold" text-anchor="middle" textLength="9" lengthAdjust="spacingAndGlyphs">-40</text><text x="612.57" y="274" font-size="6.3" fill="#fff" font-weight="bold" text-anchor="middle" textLength="9" lengthAdjust="spacingAndGlyphs">-20</text><text x="624.13" y="274" font-size="6.3" fill="#fff" font-weight="bold" text-anchor="middle" textLength="4.5" lengthAdjust="spacingAndGlyphs">0</text><text x="635.7" y="274" font-size="6.3" fill="#fff" font-weight="bold" text-anchor="middle" textLength="9" lengthAdjust="spacingAndGlyphs">+20</text><text x="732.5" y="256" font-size="5.2" fill="#cfd4d7" font-weight="normal" text-anchor="middle" textLength="12" lengthAdjust="spacingAndGlyphs">AGC</text><text x="732.5" y="293" font-size="5.2" fill="#cfd4d7" font-weight="normal" text-anchor="middle" textLength="12" lengthAdjust="spacingAndGlyphs">AGC</text><path d="M729.33 258.5h0M732.17 258.5h0M735 258.5h0M740.67 258.5h0M743.5 258.5h0M746.33 258.5h0M752 258.5h0M754.83 258.5h0M757.67 258.5h0" stroke="#3b474e" stroke-width="1.2" stroke-linecap="square"/><path d="M726.5 258.5h0M737.83 258.5h0M749.17 258.5h0M760.5 258.5h0" stroke="#e8e8e8" stroke-width="1.5" stroke-linecap="square"/><path d="M726.5 258.5h2" stroke="#f01818" stroke-width="1.6"/><path d="M729.33 262h0M732.17 262h0M735 262h0M740.67 262h0M743.5 262h0M746.33 262h0M752 262h0M754.83 262h0M757.67 262h0" stroke="#3b474e" stroke-width="1.2" stroke-linecap="square"/><path d="M726.5 262h0M737.83 262h0M749.17 262h0M760.5 262h0" stroke="#e8e8e8" stroke-width="1.5" stroke-linecap="square"/><path d="M726.5 262h2" stroke="#f01818" stroke-width="1.6"/><path d="M752 283h0M754.83 283h0M757.67 283h0" stroke="#3b474e" stroke-width="1.2" stroke-linecap="square"/><path d="M729.33 283h0M732.17 283h0M735 283h0M740.67 283h0M743.5 283h0M746.33 283h0" stroke="#f4c20d" stroke-width="1.6" stroke-linecap="square"/><path d="M726.5 283h0M737.83 283h0M749.17 283h0M760.5 283h0" stroke="#e8e8e8" stroke-width="1.5" stroke-linecap="square"/><path d="M726.5 283h2" stroke="#f01818" stroke-width="1.6"/><path d="M752 286.6h0M754.83 286.6h0M757.67 286.6h0" stroke="#3b474e" stroke-width="1.2" stroke-linecap="square"/><path d="M729.33 286.6h0M732.17 286.6h0M735 286.6h0M740.67 286.6h0M743.5 286.6h0M746.33 286.6h0" stroke="#f4c20d" stroke-width="1.6" stroke-linecap="square"/><path d="M726.5 286.6h0M737.83 286.6h0M749.17 286.6h0M760.5 286.6h0" stroke="#e8e8e8" stroke-width="1.5" stroke-linecap="square"/><path d="M726.5 286.6h2" stroke="#f01818" stroke-width="1.6"/><path d="M726.5 265v2.6M726.5 277v2.6M737.83 265v2.6M737.83 277v2.6M749.17 265v2.6M749.17 277v2.6M760.5 265v2.6M760.5 277v2.6" stroke="#cfd4d7" stroke-width="1"/><text x="726.5" y="274" font-size="6.3" fill="#fff" font-weight="bold" text-anchor="middle" textLength="9" lengthAdjust="spacingAndGlyphs">-40</text><text x="737.83" y="274" font-size="6.3" fill="#fff" font-weight="bold" text-anchor="middle" textLength="9" lengthAdjust="spacingAndGlyphs">-20</text><text x="749.17" y="274" font-size="6.3" fill="#fff" font-weight="bold" text-anchor="middle" textLength="4.5" lengthAdjust="spacingAndGlyphs">0</text><text x="760.5" y="274" font-size="6.3" fill="#fff" font-weight="bold" text-anchor="middle" textLength="9" lengthAdjust="spacingAndGlyphs">+20</text><rect x="778" y="240" width="123" height="8.4" fill="url(#tg)"/><text x="839.5" y="247" text-anchor="middle" class="tt">AUDIO SELECTOR</text><rect x="778" y="250" width="123" height="41.19999999999999" fill="#1a2227"/><rect x="778.5" y="251.5" width="21.8" height="8.8" rx="1.3" fill="none" stroke="#c4161c" stroke-width="1"/><text x="789.4" y="258.5" font-size="6.3" fill="#8a1216" font-weight="bold" text-anchor="middle" textLength="18" lengthAdjust="spacingAndGlyphs">SRC-1</text><rect x="778.5" y="261.8" width="21.8" height="8.8" rx="1.3" fill="none" stroke="#c4161c" stroke-width="1"/><text x="789.4" y="268.8" font-size="6.3" fill="#8a1216" font-weight="bold" text-anchor="middle" textLength="18" lengthAdjust="spacingAndGlyphs">SRC-2</text><rect x="778.5" y="272.1" width="21.8" height="8.8" rx="1.3" fill="none" stroke="#c4161c" stroke-width="1"/><text x="789.4" y="279.1" font-size="6.3" fill="#8a1216" font-weight="bold" text-anchor="middle" textLength="18" lengthAdjust="spacingAndGlyphs">SRC-3</text><rect x="778.5" y="282.4" width="21.8" height="8.8" rx="1.3" fill="none" stroke="#e39a1b" stroke-width="1"/><text x="789.4" y="289.4" font-size="6.3" fill="#e39a1b" font-weight="bold" text-anchor="middle" textLength="18" lengthAdjust="spacingAndGlyphs">SRC-4</text><path d="M801 256c5 0 5 5 9 5M801 266.5c4 0 4 1 8 1M801 276.5c4 0 5-1 8-2M801 286.5c4 0 4-3 9-4" stroke="#dfe3e5" stroke-width="0.9" fill="none"/><g fill="#1a2227" stroke="#eef0f1" stroke-width="1.4"><circle cx="812.5" cy="260" r="2.4"/><circle cx="810.5" cy="267.5" r="2.4"/><circle cx="810.5" cy="275" r="2.4"/><circle cx="812.5" cy="282.6" r="2.4"/><circle cx="826" cy="271" r="2.4"/></g><path d="M814 281l10.5-8.5M828.5 271h5" stroke="#eef0f1" stroke-width="1.3"/><text x="836" y="273.5" font-size="6.6" fill="#d6dbde" font-weight="bold" text-anchor="start" textLength="53" lengthAdjust="spacingAndGlyphs">SELECTOR OUT.</text><rect x="828" y="252.5" width="23" height="8.5" rx="1.5" fill="none" stroke="#e39a1b" stroke-width="1.1"/><text x="839.5" y="259.5" font-size="6.5" fill="#e39a1b" font-weight="bold" text-anchor="middle" textLength="17" lengthAdjust="spacingAndGlyphs">AUTO</text><rect x="854.5" y="252.5" width="18" height="8.5" rx="1.5" fill="none" stroke="#333d42" stroke-width="1"/><rect x="874.5" y="252.5" width="23" height="8.5" rx="1.5" fill="none" stroke="#333d42" stroke-width="1"/><text x="863.5" y="259.5" font-size="6.5" fill="#333d42" font-weight="bold" text-anchor="middle" textLength="13" lengthAdjust="spacingAndGlyphs">MAN</text><text x="886" y="259.5" font-size="6.5" fill="#333d42" font-weight="bold" text-anchor="middle" textLength="17" lengthAdjust="spacingAndGlyphs">TONE</text><rect x="829" y="280.5" width="24" height="8.5" rx="1.5" fill="none" stroke="#333d42" stroke-width="1"/><text x="841" y="287.5" font-size="6.5" fill="#333d42" font-weight="bold" text-anchor="middle" textLength="19" lengthAdjust="spacingAndGlyphs">DELAY</text><rect x="908" y="240" width="253.5" height="8.4" fill="url(#tg)"/><text x="1034.5" y="247" text-anchor="middle" class="tt">AUDIO SELECTOR OUTPUT</text><rect x="908" y="250" width="253.5" height="41.19999999999999" fill="#1a2227"/><text x="908.5" y="264.8" font-size="6.8" fill="#d0d5d8" font-weight="bold" text-anchor="start" textLength="17" lengthAdjust="spacingAndGlyphs">INFO</text><text x="910" y="279.5" font-size="6.5" fill="#d0d5d8" font-weight="bold" text-anchor="start" textLength="14.5" lengthAdjust="spacingAndGlyphs">LEFT</text><text x="910" y="290.5" font-size="6.5" fill="#d0d5d8" font-weight="bold" text-anchor="start" textLength="19" lengthAdjust="spacingAndGlyphs">RIGHT</text><path d="M1023.8 276.6h0M1026.76 276.6h0M1029.72 276.6h0M1032.68 276.6h0M1038.6 276.6h0M1041.56 276.6h0M1044.52 276.6h0M1047.48 276.6h0M1050.44 276.6h0M1053.4 276.6h0M1059.32 276.6h0M1062.28 276.6h0M1065.24 276.6h0M1068.2 276.6h0M1071.16 276.6h0M1074.12 276.6h0M1080.04 276.6h0M1083 276.6h0M1085.96 276.6h0M1088.92 276.6h0M1091.88 276.6h0M1094.84 276.6h0M1100.76 276.6h0M1103.72 276.6h0M1106.68 276.6h0M1109.64 276.6h0M1112.6 276.6h0M1115.56 276.6h0M1121.48 276.6h0M1124.44 276.6h0M1127.4 276.6h0M1130.36 276.6h0M1133.32 276.6h0M1139.24 276.6h0M1142.2 276.6h0M1145.16 276.6h0M1148.12 276.6h0M1151.08 276.6h0M1157 276.6h0" stroke="#414c53" stroke-width="1.5" stroke-linecap="square"/><path d="M935 276.6h0M937.96 276.6h0M940.92 276.6h0M943.88 276.6h0M949.8 276.6h0M952.76 276.6h0M955.72 276.6h0M958.68 276.6h0M961.64 276.6h0M964.6 276.6h0M970.52 276.6h0M973.48 276.6h0M976.44 276.6h0M979.4 276.6h0M982.36 276.6h0M985.32 276.6h0M988.28 276.6h0M991.24 276.6h0M997.16 276.6h0M1000.12 276.6h0M1003.08 276.6h0M1006.04 276.6h0M1009 276.6h0M1011.96 276.6h0M1017.88 276.6h0M1020.84 276.6h0" stroke="#f7c600" stroke-width="2.1" stroke-linecap="square"/><path d="M946.84 276.6h0M967.56 276.6h0M994.2 276.6h0M1014.92 276.6h0M1035.64 276.6h0M1077.08 276.6h0M1097.8 276.6h0M1118.52 276.6h0M1136.28 276.6h0M1154.04 276.6h0" stroke="#fff" stroke-width="2.1" stroke-linecap="square"/><path d="M1056.36 276.6h0" stroke="#f01818" stroke-width="2.1" stroke-linecap="square"/><path d="M1032.68 287.6h0M1038.6 287.6h0M1041.56 287.6h0M1044.52 287.6h0M1047.48 287.6h0M1050.44 287.6h0M1053.4 287.6h0M1062.28 287.6h0M1065.24 287.6h0M1068.2 287.6h0M1071.16 287.6h0M1074.12 287.6h0M1080.04 287.6h0M1083 287.6h0M1085.96 287.6h0M1088.92 287.6h0M1091.88 287.6h0M1094.84 287.6h0M1100.76 287.6h0M1103.72 287.6h0M1106.68 287.6h0M1109.64 287.6h0M1112.6 287.6h0M1115.56 287.6h0M1121.48 287.6h0M1124.44 287.6h0M1127.4 287.6h0M1130.36 287.6h0M1133.32 287.6h0M1139.24 287.6h0M1142.2 287.6h0M1145.16 287.6h0M1148.12 287.6h0M1151.08 287.6h0M1157 287.6h0" stroke="#414c53" stroke-width="1.5" stroke-linecap="square"/><path d="M935 287.6h0M937.96 287.6h0M940.92 287.6h0M943.88 287.6h0M949.8 287.6h0M952.76 287.6h0M955.72 287.6h0M958.68 287.6h0M961.64 287.6h0M964.6 287.6h0M970.52 287.6h0M973.48 287.6h0M976.44 287.6h0M979.4 287.6h0M982.36 287.6h0M985.32 287.6h0M988.28 287.6h0M991.24 287.6h0M997.16 287.6h0M1000.12 287.6h0M1003.08 287.6h0M1006.04 287.6h0M1009 287.6h0M1011.96 287.6h0M1017.88 287.6h0M1020.84 287.6h0M1023.8 287.6h0M1026.76 287.6h0M1029.72 287.6h0" stroke="#f7c600" stroke-width="2.1" stroke-linecap="square"/><path d="M946.84 287.6h0M967.56 287.6h0M994.2 287.6h0M1014.92 287.6h0M1035.64 287.6h0M1056.36 287.6h0M1077.08 287.6h0M1097.8 287.6h0M1118.52 287.6h0M1136.28 287.6h0M1154.04 287.6h0" stroke="#fff" stroke-width="2.1" stroke-linecap="square"/><path d="M1059.32 287.6h0" stroke="#f01818" stroke-width="2.1" stroke-linecap="square"/><path d="M935.9 280v3.6M957.7 280v3.6M981.5 280v3.6M1004.5 280v3.6M1025.35 280v3.6M1046.35 280v3.6M1067 280v3.6M1087 280v3.6M1107.5 280v3.6M1127.5 280v3.6M1146 280v3.6" stroke="#6c7a82" stroke-width="0.8"/><text x="946.4" y="284.3" font-size="6.3" fill="#fff" font-weight="bold" text-anchor="middle">-30</text><text x="969" y="284.3" font-size="6.3" fill="#fff" font-weight="bold" text-anchor="middle">-18</text><text x="994" y="284.3" font-size="6.3" fill="#fff" font-weight="bold" text-anchor="middle">-6</text><text x="1015" y="284.3" font-size="6.3" fill="#fff" font-weight="bold" text-anchor="middle">-4</text><text x="1035.7" y="284.3" font-size="6.3" fill="#fff" font-weight="bold" text-anchor="middle">-2</text><text x="1057" y="284.3" font-size="6.3" fill="#fff" font-weight="bold" text-anchor="middle">0</text><text x="1077" y="284.3" font-size="6.3" fill="#fff" font-weight="bold" text-anchor="middle">+2</text><text x="1097" y="284.3" font-size="6.3" fill="#fff" font-weight="bold" text-anchor="middle">+4</text><text x="1118" y="284.3" font-size="6.3" fill="#fff" font-weight="bold" text-anchor="middle">+6</text><text x="1137" y="284.3" font-size="6.3" fill="#fff" font-weight="bold" text-anchor="middle">+12</text><text x="1155" y="284.3" font-size="6.3" fill="#fff" font-weight="bold" text-anchor="middle">+18</text><rect x="1212" y="240" width="351" height="8.4" fill="url(#tg)"/><text x="1387.5" y="247" text-anchor="middle" class="tt">STREAMING MONITOR OUTPUT</text><rect x="1212" y="250" width="351" height="41.19999999999999" fill="#1a2227"/><text x="1217" y="263.5" font-size="6.8" fill="#d0d5d8" font-weight="bold" text-anchor="start" textLength="16" lengthAdjust="spacingAndGlyphs">TYPE</text><text x="1217" y="279" font-size="6.5" fill="#d0d5d8" font-weight="bold" text-anchor="start" textLength="14.5" lengthAdjust="spacingAndGlyphs">LEFT</text><text x="1217" y="290" font-size="6.5" fill="#d0d5d8" font-weight="bold" text-anchor="start" textLength="19" lengthAdjust="spacingAndGlyphs">RIGHT</text><path d="M1340.58 276h0M1343.52 276h0M1346.46 276h0M1349.4 276h0M1352.34 276h0M1355.28 276h0M1361.16 276h0M1364.1 276h0M1367.05 276h0M1369.99 276h0M1372.93 276h0M1375.87 276h0M1378.81 276h0M1381.75 276h0M1384.69 276h0M1390.57 276h0M1393.51 276h0M1396.45 276h0M1399.39 276h0M1405.27 276h0M1408.21 276h0M1411.15 276h0M1414.1 276h0M1419.98 276h0M1422.92 276h0M1425.86 276h0M1428.8 276h0M1431.74 276h0M1434.68 276h0M1437.62 276h0M1440.56 276h0M1443.5 276h0M1449.38 276h0M1452.32 276h0M1455.26 276h0M1458.2 276h0M1461.14 276h0M1464.09 276h0M1467.03 276h0M1469.97 276h0M1472.91 276h0M1478.79 276h0M1481.73 276h0M1484.67 276h0M1487.61 276h0M1490.55 276h0M1493.49 276h0M1496.43 276h0M1499.37 276h0M1502.31 276h0M1505.25 276h0M1511.13 276h0M1514.08 276h0M1517.02 276h0M1519.96 276h0M1522.9 276h0M1525.84 276h0M1528.78 276h0M1531.72 276h0M1534.66 276h0" stroke="#414c53" stroke-width="1.5" stroke-linecap="square"/><path d="M1240.6 276h0M1243.54 276h0M1246.48 276h0M1249.42 276h0M1255.3 276h0M1258.24 276h0M1261.18 276h0M1264.12 276h0M1267.07 276h0M1272.95 276h0M1275.89 276h0M1278.83 276h0M1281.77 276h0M1284.71 276h0M1287.65 276h0M1290.59 276h0M1293.53 276h0M1296.47 276h0M1302.35 276h0M1305.29 276h0M1308.23 276h0M1311.17 276h0M1314.11 276h0M1317.06 276h0M1320 276h0M1322.94 276h0M1325.88 276h0M1331.76 276h0M1334.7 276h0M1337.64 276h0" stroke="#f7c600" stroke-width="2.1" stroke-linecap="square"/><path d="M1252.36 276h0M1270.01 276h0M1299.41 276h0M1328.82 276h0M1358.22 276h0M1387.63 276h0M1417.04 276h0M1446.44 276h0M1475.85 276h0M1508.19 276h0M1537.6 276h0" stroke="#fff" stroke-width="2.1" stroke-linecap="square"/><path d="M1402.33 276h0" stroke="#f01818" stroke-width="2.1" stroke-linecap="square"/><path d="M1343.52 286.6h0M1346.46 286.6h0M1349.4 286.6h0M1352.34 286.6h0M1355.28 286.6h0M1361.16 286.6h0M1364.1 286.6h0M1367.05 286.6h0M1369.99 286.6h0M1372.93 286.6h0M1375.87 286.6h0M1378.81 286.6h0M1381.75 286.6h0M1384.69 286.6h0M1393.51 286.6h0M1396.45 286.6h0M1399.39 286.6h0M1402.33 286.6h0M1405.27 286.6h0M1408.21 286.6h0M1411.15 286.6h0M1414.1 286.6h0M1419.98 286.6h0M1422.92 286.6h0M1425.86 286.6h0M1428.8 286.6h0M1431.74 286.6h0M1434.68 286.6h0M1437.62 286.6h0M1440.56 286.6h0M1443.5 286.6h0M1449.38 286.6h0M1452.32 286.6h0M1455.26 286.6h0M1458.2 286.6h0M1461.14 286.6h0M1464.09 286.6h0M1467.03 286.6h0M1469.97 286.6h0M1472.91 286.6h0M1478.79 286.6h0M1481.73 286.6h0M1484.67 286.6h0M1487.61 286.6h0M1490.55 286.6h0M1493.49 286.6h0M1496.43 286.6h0M1499.37 286.6h0M1502.31 286.6h0M1505.25 286.6h0M1511.13 286.6h0M1514.08 286.6h0M1517.02 286.6h0M1519.96 286.6h0M1522.9 286.6h0M1525.84 286.6h0M1528.78 286.6h0M1531.72 286.6h0M1534.66 286.6h0" stroke="#414c53" stroke-width="1.5" stroke-linecap="square"/><path d="M1240.6 286.6h0M1243.54 286.6h0M1246.48 286.6h0M1249.42 286.6h0M1255.3 286.6h0M1258.24 286.6h0M1261.18 286.6h0M1264.12 286.6h0M1267.07 286.6h0M1272.95 286.6h0M1275.89 286.6h0M1278.83 286.6h0M1281.77 286.6h0M1284.71 286.6h0M1287.65 286.6h0M1290.59 286.6h0M1293.53 286.6h0M1296.47 286.6h0M1302.35 286.6h0M1305.29 286.6h0M1308.23 286.6h0M1311.17 286.6h0M1314.11 286.6h0M1317.06 286.6h0M1320 286.6h0M1322.94 286.6h0M1325.88 286.6h0M1331.76 286.6h0M1334.7 286.6h0M1337.64 286.6h0M1340.58 286.6h0" stroke="#f7c600" stroke-width="2.1" stroke-linecap="square"/><path d="M1252.36 286.6h0M1270.01 286.6h0M1299.41 286.6h0M1328.82 286.6h0M1358.22 286.6h0M1387.63 286.6h0M1417.04 286.6h0M1446.44 286.6h0M1475.85 286.6h0M1508.19 286.6h0M1537.6 286.6h0" stroke="#fff" stroke-width="2.1" stroke-linecap="square"/><path d="M1390.57 286.6h0" stroke="#f01818" stroke-width="2.1" stroke-linecap="square"/><text x="1252" y="283.5" font-size="6.3" fill="#fff" font-weight="bold" text-anchor="middle">-30</text><text x="1270" y="283.5" font-size="6.3" fill="#fff" font-weight="bold" text-anchor="middle">-18</text><text x="1300" y="283.5" font-size="6.3" fill="#fff" font-weight="bold" text-anchor="middle">-6</text><text x="1329" y="283.5" font-size="6.3" fill="#fff" font-weight="bold" text-anchor="middle">-4</text><text x="1358" y="283.5" font-size="6.3" fill="#fff" font-weight="bold" text-anchor="middle">-2</text><text x="1389" y="283.5" font-size="6.3" fill="#fff" font-weight="bold" text-anchor="middle">0</text><text x="1418" y="283.5" font-size="6.3" fill="#fff" font-weight="bold" text-anchor="middle">+2</text><text x="1447" y="283.5" font-size="6.3" fill="#fff" font-weight="bold" text-anchor="middle">+4</text><text x="1477" y="283.5" font-size="6.3" fill="#fff" font-weight="bold" text-anchor="middle">+6</text><text x="1508" y="283.5" font-size="6.3" fill="#fff" font-weight="bold" text-anchor="middle">+12</text><text x="1537.6" y="283.5" font-size="6.3" fill="#fff" font-weight="bold" text-anchor="middle">+18</text><rect x="386" y="297" width="254.5" height="8.4" fill="url(#tg)"/><text x="513.25" y="304" text-anchor="middle" class="tt">ANALOG OUTPUT</text><rect x="386" y="307.5" width="254.5" height="41.0" fill="#1a2227"/><text x="386.5" y="322" font-size="6.8" fill="#d0d5d8" font-weight="bold" text-anchor="start" textLength="17" lengthAdjust="spacingAndGlyphs">INFO</text><text x="388" y="336" font-size="6.5" fill="#d0d5d8" font-weight="bold" text-anchor="start" textLength="14.5" lengthAdjust="spacingAndGlyphs">LEFT</text><text x="388" y="347" font-size="6.5" fill="#d0d5d8" font-weight="bold" text-anchor="start" textLength="19" lengthAdjust="spacingAndGlyphs">RIGHT</text><path d="M519.3 333.5h0M522.23 333.5h0M525.17 333.5h0M528.1 333.5h0M531.03 333.5h0M536.9 333.5h0M539.83 333.5h0M542.77 333.5h0M545.7 333.5h0M548.63 333.5h0M551.57 333.5h0M557.43 333.5h0M560.37 333.5h0M563.3 333.5h0M566.23 333.5h0M569.17 333.5h0M572.1 333.5h0M577.97 333.5h0M580.9 333.5h0M583.83 333.5h0M586.77 333.5h0M589.7 333.5h0M592.63 333.5h0M598.5 333.5h0M601.43 333.5h0M604.37 333.5h0M607.3 333.5h0M610.23 333.5h0M613.17 333.5h0M619.03 333.5h0M621.97 333.5h0M624.9 333.5h0M627.83 333.5h0M630.77 333.5h0" stroke="#414c53" stroke-width="1.5" stroke-linecap="square"/><path d="M413.7 333.5h0M416.63 333.5h0M419.57 333.5h0M422.5 333.5h0M428.37 333.5h0M431.3 333.5h0M434.23 333.5h0M437.17 333.5h0M440.1 333.5h0M443.03 333.5h0M445.97 333.5h0M451.83 333.5h0M454.77 333.5h0M457.7 333.5h0M460.63 333.5h0M463.57 333.5h0M466.5 333.5h0M469.43 333.5h0M475.3 333.5h0M478.23 333.5h0M481.17 333.5h0M484.1 333.5h0M487.03 333.5h0M489.97 333.5h0M495.83 333.5h0M498.77 333.5h0M501.7 333.5h0M504.63 333.5h0M507.57 333.5h0M510.5 333.5h0M513.43 333.5h0" stroke="#f7c600" stroke-width="2.1" stroke-linecap="square"/><path d="M425.43 333.5h0M448.9 333.5h0M472.37 333.5h0M492.9 333.5h0M516.37 333.5h0M554.5 333.5h0M575.03 333.5h0M595.57 333.5h0M616.1 333.5h0M633.7 333.5h0" stroke="#fff" stroke-width="2.1" stroke-linecap="square"/><path d="M533.97 333.5h0" stroke="#f01818" stroke-width="2.1" stroke-linecap="square"/><path d="M519.3 344.5h0M522.23 344.5h0M525.17 344.5h0M528.1 344.5h0M531.03 344.5h0M536.9 344.5h0M539.83 344.5h0M542.77 344.5h0M545.7 344.5h0M548.63 344.5h0M551.57 344.5h0M557.43 344.5h0M560.37 344.5h0M563.3 344.5h0M566.23 344.5h0M569.17 344.5h0M572.1 344.5h0M577.97 344.5h0M580.9 344.5h0M583.83 344.5h0M586.77 344.5h0M589.7 344.5h0M592.63 344.5h0M598.5 344.5h0M601.43 344.5h0M604.37 344.5h0M607.3 344.5h0M610.23 344.5h0M613.17 344.5h0M619.03 344.5h0M621.97 344.5h0M624.9 344.5h0M627.83 344.5h0M630.77 344.5h0" stroke="#414c53" stroke-width="1.5" stroke-linecap="square"/><path d="M413.7 344.5h0M416.63 344.5h0M419.57 344.5h0M422.5 344.5h0M428.37 344.5h0M431.3 344.5h0M434.23 344.5h0M437.17 344.5h0M440.1 344.5h0M443.03 344.5h0M445.97 344.5h0M451.83 344.5h0M454.77 344.5h0M457.7 344.5h0M460.63 344.5h0M463.57 344.5h0M466.5 344.5h0M469.43 344.5h0M475.3 344.5h0M478.23 344.5h0M481.17 344.5h0M484.1 344.5h0M487.03 344.5h0M489.97 344.5h0M495.83 344.5h0M498.77 344.5h0M501.7 344.5h0M504.63 344.5h0M507.57 344.5h0M510.5 344.5h0M513.43 344.5h0" stroke="#f7c600" stroke-width="2.1" stroke-linecap="square"/><path d="M425.43 344.5h0M448.9 344.5h0M472.37 344.5h0M492.9 344.5h0M516.37 344.5h0M554.5 344.5h0M575.03 344.5h0M595.57 344.5h0M616.1 344.5h0M633.7 344.5h0" stroke="#fff" stroke-width="2.1" stroke-linecap="square"/><path d="M533.97 344.5h0" stroke="#f01818" stroke-width="2.1" stroke-linecap="square"/><path d="M415.4 337v3.6M437.7 337v3.6M461.35 337v3.6M483.6 337v3.6M504.5 337v3.6M524.6 337v3.6M544.85 337v3.6M565.5 337v3.6M585.75 337v3.6M605.5 337v3.6M624 337v3.6" stroke="#6c7a82" stroke-width="0.8"/><text x="425.9" y="341.3" font-size="6.3" fill="#fff" font-weight="bold" text-anchor="middle">-30</text><text x="449.5" y="341.3" font-size="6.3" fill="#fff" font-weight="bold" text-anchor="middle">-18</text><text x="473.2" y="341.3" font-size="6.3" fill="#fff" font-weight="bold" text-anchor="middle">-6</text><text x="494" y="341.3" font-size="6.3" fill="#fff" font-weight="bold" text-anchor="middle">-4</text><text x="515" y="341.3" font-size="6.3" fill="#fff" font-weight="bold" text-anchor="middle">-2</text><text x="534.2" y="341.3" font-size="6.3" fill="#fff" font-weight="bold" text-anchor="middle">0</text><text x="555.5" y="341.3" font-size="6.3" fill="#fff" font-weight="bold" text-anchor="middle">+2</text><text x="575.5" y="341.3" font-size="6.3" fill="#fff" font-weight="bold" text-anchor="middle">+4</text><text x="596" y="341.3" font-size="6.3" fill="#fff" font-weight="bold" text-anchor="middle">+6</text><text x="615" y="341.3" font-size="6.3" fill="#fff" font-weight="bold" text-anchor="middle">+12</text><text x="633" y="341.3" font-size="6.3" fill="#fff" font-weight="bold" text-anchor="middle">+18</text><rect x="647" y="297" width="123.5" height="8.4" fill="url(#tg)"/><text x="708.75" y="304" text-anchor="middle" class="tt">DIGITAL 1 OUTPUT</text><rect x="647" y="307.5" width="123.5" height="41.0" fill="#1a2227"/><text x="647.5" y="322" font-size="6.8" fill="#d0d5d8" font-weight="bold" text-anchor="start" textLength="13.5" lengthAdjust="spacingAndGlyphs">INF.</text><path d="M654.6 331.6h9M688.9 331.6h9.4M706.6 331.6h19M746 331.6h19.3" stroke="#9aa7ad" stroke-width="1"/><text x="676.25" y="334.1" font-size="6.5" fill="#9fb0b6" font-weight="bold" text-anchor="middle" textLength="23" lengthAdjust="spacingAndGlyphs">CONFIG</text><text x="736.35" y="334.1" font-size="6.5" fill="#9fb0b6" font-weight="bold" text-anchor="middle" textLength="17" lengthAdjust="spacingAndGlyphs">FREQ.</text><circle cx="664.4" cy="339.1" r="2.6" fill="#f5a81c"/><circle cx="686.5" cy="339.1" r="2.6" fill="#34434a"/><circle cx="710.5" cy="339.1" r="2.6" fill="#34434a"/><circle cx="734.2" cy="339.1" r="2.6" fill="#34434a"/><circle cx="759" cy="339.1" r="2.6" fill="#34434a"/><text x="664.4" y="347.6" font-size="6.3" fill="#f5a81c" font-weight="bold" text-anchor="middle" textLength="21" lengthAdjust="spacingAndGlyphs">AUDIO</text><text x="686.5" y="347.6" font-size="6" fill="#2d383d" font-weight="bold" text-anchor="middle">MPX</text><text x="710.5" y="347.6" font-size="6" fill="#2d383d" font-weight="bold" text-anchor="middle">48kHz</text><text x="734.2" y="347.6" font-size="6" fill="#2d383d" font-weight="bold" text-anchor="middle">96kHz</text><text x="759" y="347.6" font-size="6" fill="#2d383d" font-weight="bold" text-anchor="middle">192kHz</text><rect x="778" y="297" width="123" height="8.4" fill="url(#tg)"/><text x="839.5" y="304" text-anchor="middle" class="tt">DIGITAL 2 OUTPUT</text><rect x="778" y="307.5" width="123" height="41.0" fill="#1a2227"/><text x="778.5" y="322" font-size="6.8" fill="#d0d5d8" font-weight="bold" text-anchor="start" textLength="13.5" lengthAdjust="spacingAndGlyphs">INF.</text><path d="M785.6 331.6h9M819.9 331.6h9.4M837.6 331.6h19M877 331.6h19.3" stroke="#9aa7ad" stroke-width="1"/><text x="807.25" y="334.1" font-size="6.5" fill="#9fb0b6" font-weight="bold" text-anchor="middle" textLength="23" lengthAdjust="spacingAndGlyphs">CONFIG</text><text x="867.35" y="334.1" font-size="6.5" fill="#9fb0b6" font-weight="bold" text-anchor="middle" textLength="17" lengthAdjust="spacingAndGlyphs">FREQ.</text><circle cx="795.4" cy="339.1" r="2.6" fill="#f5a81c"/><circle cx="817.5" cy="339.1" r="2.6" fill="#34434a"/><circle cx="841.5" cy="339.1" r="2.6" fill="#34434a"/><circle cx="865.2" cy="339.1" r="2.6" fill="#34434a"/><circle cx="890" cy="339.1" r="2.6" fill="#34434a"/><text x="795.4" y="347.6" font-size="6.3" fill="#f5a81c" font-weight="bold" text-anchor="middle" textLength="21" lengthAdjust="spacingAndGlyphs">AUDIO</text><text x="817.5" y="347.6" font-size="6" fill="#2d383d" font-weight="bold" text-anchor="middle">MPX</text><text x="841.5" y="347.6" font-size="6" fill="#2d383d" font-weight="bold" text-anchor="middle">48kHz</text><text x="865.2" y="347.6" font-size="6" fill="#2d383d" font-weight="bold" text-anchor="middle">96kHz</text><text x="890" y="347.6" font-size="6" fill="#2d383d" font-weight="bold" text-anchor="middle">192kHz</text><rect x="908" y="297" width="253.5" height="8.4" fill="url(#tg)"/><text x="1034.5" y="304" text-anchor="middle" class="tt">DIGITAL 1-2 OUTPUT LEVELS</text><rect x="908" y="307.5" width="253.5" height="41.0" fill="#1a2227"/><text x="908.5" y="320.5" font-size="9" fill="#d0d5d8" font-weight="bold" text-anchor="start" textLength="16" lengthAdjust="spacingAndGlyphs">DG1</text><text x="908.5" y="343.3" font-size="9" fill="#d0d5d8" font-weight="bold" text-anchor="start" textLength="16" lengthAdjust="spacingAndGlyphs">DG2</text><text x="931" y="313" font-size="5.5" fill="#d0d5d8" font-weight="bold" text-anchor="middle">1</text><text x="931" y="324.2" font-size="5.5" fill="#d0d5d8" font-weight="bold" text-anchor="middle">2</text><path d="M1073.01 311h0M1075.96 311h0M1081.87 311h0M1084.82 311h0M1087.77 311h0M1090.73 311h0M1096.63 311h0M1099.59 311h0M1102.54 311h0M1105.49 311h0M1108.45 311h0M1111.4 311h0M1117.31 311h0M1120.26 311h0M1123.21 311h0M1126.17 311h0M1129.12 311h0M1132.07 311h0M1137.98 311h0M1140.93 311h0M1143.89 311h0M1146.84 311h0M1149.79 311h0M1152.75 311h0" stroke="#414c53" stroke-width="1.5" stroke-linecap="square"/><path d="M934.2 311h0M937.15 311h0M940.11 311h0M943.06 311h0M948.97 311h0M951.92 311h0M954.87 311h0M957.83 311h0M960.78 311h0M963.73 311h0M969.64 311h0M972.59 311h0M975.55 311h0M978.5 311h0M981.45 311h0M984.41 311h0M990.31 311h0M993.27 311h0M996.22 311h0M999.17 311h0M1002.13 311h0M1005.08 311h0M1010.99 311h0M1013.94 311h0M1016.89 311h0M1019.85 311h0M1022.8 311h0M1025.75 311h0M1031.66 311h0M1034.61 311h0M1037.57 311h0M1040.52 311h0M1043.47 311h0M1046.43 311h0M1052.33 311h0M1055.29 311h0M1058.24 311h0M1061.19 311h0M1064.15 311h0M1067.1 311h0" stroke="#f7c600" stroke-width="2.1" stroke-linecap="square"/><path d="M946.01 311h0M966.69 311h0M987.36 311h0M1008.03 311h0M1028.71 311h0M1049.38 311h0M1070.05 311h0M1093.68 311h0M1114.35 311h0M1135.03 311h0M1155.7 311h0" stroke="#fff" stroke-width="2.1" stroke-linecap="square"/><path d="M1078.91 311h0" stroke="#f01818" stroke-width="2.1" stroke-linecap="square"/><path d="M1073.01 322.2h0M1075.96 322.2h0M1081.87 322.2h0M1084.82 322.2h0M1087.77 322.2h0M1090.73 322.2h0M1096.63 322.2h0M1099.59 322.2h0M1102.54 322.2h0M1105.49 322.2h0M1108.45 322.2h0M1111.4 322.2h0M1117.31 322.2h0M1120.26 322.2h0M1123.21 322.2h0M1126.17 322.2h0M1129.12 322.2h0M1132.07 322.2h0M1137.98 322.2h0M1140.93 322.2h0M1143.89 322.2h0M1146.84 322.2h0M1149.79 322.2h0M1152.75 322.2h0" stroke="#414c53" stroke-width="1.5" stroke-linecap="square"/><path d="M934.2 322.2h0M937.15 322.2h0M940.11 322.2h0M943.06 322.2h0M948.97 322.2h0M951.92 322.2h0M954.87 322.2h0M957.83 322.2h0M960.78 322.2h0M963.73 322.2h0M969.64 322.2h0M972.59 322.2h0M975.55 322.2h0M978.5 322.2h0M981.45 322.2h0M984.41 322.2h0M990.31 322.2h0M993.27 322.2h0M996.22 322.2h0M999.17 322.2h0M1002.13 322.2h0M1005.08 322.2h0M1010.99 322.2h0M1013.94 322.2h0M1016.89 322.2h0M1019.85 322.2h0M1022.8 322.2h0M1025.75 322.2h0M1031.66 322.2h0M1034.61 322.2h0M1037.57 322.2h0M1040.52 322.2h0M1043.47 322.2h0M1046.43 322.2h0M1052.33 322.2h0M1055.29 322.2h0M1058.24 322.2h0M1061.19 322.2h0M1064.15 322.2h0M1067.1 322.2h0" stroke="#f7c600" stroke-width="2.1" stroke-linecap="square"/><path d="M946.01 322.2h0M966.69 322.2h0M987.36 322.2h0M1008.03 322.2h0M1028.71 322.2h0M1049.38 322.2h0M1070.05 322.2h0M1093.68 322.2h0M1114.35 322.2h0M1135.03 322.2h0M1155.7 322.2h0" stroke="#fff" stroke-width="2.1" stroke-linecap="square"/><path d="M1078.91 322.2h0" stroke="#f01818" stroke-width="2.1" stroke-linecap="square"/><path d="M935.4 314.5v3.6M956.7 314.5v3.6M977.75 314.5v3.6M998.5 314.5v3.6M1019.5 314.5v3.6M1040.25 314.5v3.6M1060.75 314.5v3.6M1081.8 314.5v3.6M1103.05 314.5v3.6M1123.75 314.5v3.6M1144.5 314.5v3.6" stroke="#6c7a82" stroke-width="0.8"/><text x="945.9" y="318.8" font-size="6.3" fill="#fff" font-weight="bold" text-anchor="middle">-60</text><text x="967.5" y="318.8" font-size="6.3" fill="#fff" font-weight="bold" text-anchor="middle">-50</text><text x="988" y="318.8" font-size="6.3" fill="#fff" font-weight="bold" text-anchor="middle">-40</text><text x="1009" y="318.8" font-size="6.3" fill="#fff" font-weight="bold" text-anchor="middle">-35</text><text x="1030" y="318.8" font-size="6.3" fill="#fff" font-weight="bold" text-anchor="middle">-30</text><text x="1050.5" y="318.8" font-size="6.3" fill="#fff" font-weight="bold" text-anchor="middle">-25</text><text x="1071" y="318.8" font-size="6.3" fill="#fff" font-weight="bold" text-anchor="middle">-20</text><text x="1092.6" y="318.8" font-size="6.3" fill="#fff" font-weight="bold" text-anchor="middle">-15</text><text x="1113.5" y="318.8" font-size="6.3" fill="#fff" font-weight="bold" text-anchor="middle">-10</text><text x="1134" y="318.8" font-size="6.3" fill="#fff" font-weight="bold" text-anchor="middle">-5</text><text x="1155" y="318.8" font-size="6.3" fill="#fff" font-weight="bold" text-anchor="middle">0</text><text x="931" y="335.5" font-size="5.5" fill="#d0d5d8" font-weight="bold" text-anchor="middle">1</text><text x="931" y="346.7" font-size="5.5" fill="#d0d5d8" font-weight="bold" text-anchor="middle">2</text><path d="M1073.01 333.5h0M1075.96 333.5h0M1081.87 333.5h0M1084.82 333.5h0M1087.77 333.5h0M1090.73 333.5h0M1096.63 333.5h0M1099.59 333.5h0M1102.54 333.5h0M1105.49 333.5h0M1108.45 333.5h0M1111.4 333.5h0M1117.31 333.5h0M1120.26 333.5h0M1123.21 333.5h0M1126.17 333.5h0M1129.12 333.5h0M1132.07 333.5h0M1137.98 333.5h0M1140.93 333.5h0M1143.89 333.5h0M1146.84 333.5h0M1149.79 333.5h0M1152.75 333.5h0" stroke="#414c53" stroke-width="1.5" stroke-linecap="square"/><path d="M934.2 333.5h0M937.15 333.5h0M940.11 333.5h0M943.06 333.5h0M948.97 333.5h0M951.92 333.5h0M954.87 333.5h0M957.83 333.5h0M960.78 333.5h0M963.73 333.5h0M969.64 333.5h0M972.59 333.5h0M975.55 333.5h0M978.5 333.5h0M981.45 333.5h0M984.41 333.5h0M990.31 333.5h0M993.27 333.5h0M996.22 333.5h0M999.17 333.5h0M1002.13 333.5h0M1005.08 333.5h0M1010.99 333.5h0M1013.94 333.5h0M1016.89 333.5h0M1019.85 333.5h0M1022.8 333.5h0M1025.75 333.5h0M1031.66 333.5h0M1034.61 333.5h0M1037.57 333.5h0M1040.52 333.5h0M1043.47 333.5h0M1046.43 333.5h0M1052.33 333.5h0M1055.29 333.5h0M1058.24 333.5h0M1061.19 333.5h0M1064.15 333.5h0M1067.1 333.5h0" stroke="#f7c600" stroke-width="2.1" stroke-linecap="square"/><path d="M946.01 333.5h0M966.69 333.5h0M987.36 333.5h0M1008.03 333.5h0M1028.71 333.5h0M1049.38 333.5h0M1070.05 333.5h0M1093.68 333.5h0M1114.35 333.5h0M1135.03 333.5h0M1155.7 333.5h0" stroke="#fff" stroke-width="2.1" stroke-linecap="square"/><path d="M1078.91 333.5h0" stroke="#f01818" stroke-width="2.1" stroke-linecap="square"/><path d="M1073.01 344.7h0M1075.96 344.7h0M1081.87 344.7h0M1084.82 344.7h0M1087.77 344.7h0M1090.73 344.7h0M1096.63 344.7h0M1099.59 344.7h0M1102.54 344.7h0M1105.49 344.7h0M1108.45 344.7h0M1111.4 344.7h0M1117.31 344.7h0M1120.26 344.7h0M1123.21 344.7h0M1126.17 344.7h0M1129.12 344.7h0M1132.07 344.7h0M1137.98 344.7h0M1140.93 344.7h0M1143.89 344.7h0M1146.84 344.7h0M1149.79 344.7h0M1152.75 344.7h0" stroke="#414c53" stroke-width="1.5" stroke-linecap="square"/><path d="M934.2 344.7h0M937.15 344.7h0M940.11 344.7h0M943.06 344.7h0M948.97 344.7h0M951.92 344.7h0M954.87 344.7h0M957.83 344.7h0M960.78 344.7h0M963.73 344.7h0M969.64 344.7h0M972.59 344.7h0M975.55 344.7h0M978.5 344.7h0M981.45 344.7h0M984.41 344.7h0M990.31 344.7h0M993.27 344.7h0M996.22 344.7h0M999.17 344.7h0M1002.13 344.7h0M1005.08 344.7h0M1010.99 344.7h0M1013.94 344.7h0M1016.89 344.7h0M1019.85 344.7h0M1022.8 344.7h0M1025.75 344.7h0M1031.66 344.7h0M1034.61 344.7h0M1037.57 344.7h0M1040.52 344.7h0M1043.47 344.7h0M1046.43 344.7h0M1052.33 344.7h0M1055.29 344.7h0M1058.24 344.7h0M1061.19 344.7h0M1064.15 344.7h0M1067.1 344.7h0" stroke="#f7c600" stroke-width="2.1" stroke-linecap="square"/><path d="M946.01 344.7h0M966.69 344.7h0M987.36 344.7h0M1008.03 344.7h0M1028.71 344.7h0M1049.38 344.7h0M1070.05 344.7h0M1093.68 344.7h0M1114.35 344.7h0M1135.03 344.7h0M1155.7 344.7h0" stroke="#fff" stroke-width="2.1" stroke-linecap="square"/><path d="M1078.91 344.7h0" stroke="#f01818" stroke-width="2.1" stroke-linecap="square"/><path d="M935.4 337v3.6M956.7 337v3.6M977.75 337v3.6M998.5 337v3.6M1019.5 337v3.6M1040.25 337v3.6M1060.75 337v3.6M1081.8 337v3.6M1103.05 337v3.6M1123.75 337v3.6M1144.5 337v3.6" stroke="#6c7a82" stroke-width="0.8"/><text x="945.9" y="341.3" font-size="6.3" fill="#fff" font-weight="bold" text-anchor="middle">-60</text><text x="967.5" y="341.3" font-size="6.3" fill="#fff" font-weight="bold" text-anchor="middle">-50</text><text x="988" y="341.3" font-size="6.3" fill="#fff" font-weight="bold" text-anchor="middle">-40</text><text x="1009" y="341.3" font-size="6.3" fill="#fff" font-weight="bold" text-anchor="middle">-35</text><text x="1030" y="341.3" font-size="6.3" fill="#fff" font-weight="bold" text-anchor="middle">-30</text><text x="1050.5" y="341.3" font-size="6.3" fill="#fff" font-weight="bold" text-anchor="middle">-25</text><text x="1071" y="341.3" font-size="6.3" fill="#fff" font-weight="bold" text-anchor="middle">-20</text><text x="1092.6" y="341.3" font-size="6.3" fill="#fff" font-weight="bold" text-anchor="middle">-15</text><text x="1113.5" y="341.3" font-size="6.3" fill="#fff" font-weight="bold" text-anchor="middle">-10</text><text x="1134" y="341.3" font-size="6.3" fill="#fff" font-weight="bold" text-anchor="middle">-5</text><text x="1155" y="341.3" font-size="6.3" fill="#fff" font-weight="bold" text-anchor="middle">0</text><text x="1050.8" y="329.8" font-size="5.8" fill="#d0d5d8" font-weight="bold" text-anchor="middle">dBFs</text><rect x="1212" y="297" width="351" height="8.4" fill="url(#tg)"/><text x="1387.5" y="304" text-anchor="middle" class="tt">DELAYED LINE</text><rect x="1212" y="307.5" width="351" height="41.0" fill="#1a2227"/><text x="1217" y="320.5" font-size="6.8" fill="#d0d5d8" font-weight="bold" text-anchor="start" textLength="17" lengthAdjust="spacingAndGlyphs">INFO</text><text x="1217" y="335.5" font-size="6.5" fill="#d0d5d8" font-weight="bold" text-anchor="start" textLength="14.5" lengthAdjust="spacingAndGlyphs">LEFT</text><text x="1217" y="346.5" font-size="6.5" fill="#d0d5d8" font-weight="bold" text-anchor="start" textLength="19" lengthAdjust="spacingAndGlyphs">RIGHT</text><path d="M1355.28 332.8h0M1361.16 332.8h0M1364.1 332.8h0M1367.05 332.8h0M1369.99 332.8h0M1372.93 332.8h0M1375.87 332.8h0M1378.81 332.8h0M1381.75 332.8h0M1384.69 332.8h0M1390.57 332.8h0M1393.51 332.8h0M1396.45 332.8h0M1399.39 332.8h0M1405.27 332.8h0M1408.21 332.8h0M1411.15 332.8h0M1414.1 332.8h0M1419.98 332.8h0M1422.92 332.8h0M1425.86 332.8h0M1428.8 332.8h0M1431.74 332.8h0M1434.68 332.8h0M1437.62 332.8h0M1440.56 332.8h0M1443.5 332.8h0M1449.38 332.8h0M1452.32 332.8h0M1455.26 332.8h0M1458.2 332.8h0M1461.14 332.8h0M1464.09 332.8h0M1467.03 332.8h0M1469.97 332.8h0M1472.91 332.8h0M1478.79 332.8h0M1481.73 332.8h0M1484.67 332.8h0M1487.61 332.8h0M1490.55 332.8h0M1493.49 332.8h0M1496.43 332.8h0M1499.37 332.8h0M1502.31 332.8h0M1505.25 332.8h0M1511.13 332.8h0M1514.08 332.8h0M1517.02 332.8h0M1519.96 332.8h0M1522.9 332.8h0M1525.84 332.8h0M1528.78 332.8h0M1531.72 332.8h0M1534.66 332.8h0" stroke="#414c53" stroke-width="1.5" stroke-linecap="square"/><path d="M1240.6 332.8h0M1243.54 332.8h0M1246.48 332.8h0M1249.42 332.8h0M1255.3 332.8h0M1258.24 332.8h0M1261.18 332.8h0M1264.12 332.8h0M1267.07 332.8h0M1272.95 332.8h0M1275.89 332.8h0M1278.83 332.8h0M1281.77 332.8h0M1284.71 332.8h0M1287.65 332.8h0M1290.59 332.8h0M1293.53 332.8h0M1296.47 332.8h0M1302.35 332.8h0M1305.29 332.8h0M1308.23 332.8h0M1311.17 332.8h0M1314.11 332.8h0M1317.06 332.8h0M1320 332.8h0M1322.94 332.8h0M1325.88 332.8h0M1331.76 332.8h0M1334.7 332.8h0M1337.64 332.8h0M1340.58 332.8h0M1343.52 332.8h0M1346.46 332.8h0M1349.4 332.8h0M1352.34 332.8h0" stroke="#f7c600" stroke-width="2.1" stroke-linecap="square"/><path d="M1252.36 332.8h0M1270.01 332.8h0M1299.41 332.8h0M1328.82 332.8h0M1358.22 332.8h0M1387.63 332.8h0M1417.04 332.8h0M1446.44 332.8h0M1475.85 332.8h0M1508.19 332.8h0M1537.6 332.8h0" stroke="#fff" stroke-width="2.1" stroke-linecap="square"/><path d="M1402.33 332.8h0" stroke="#f01818" stroke-width="2.1" stroke-linecap="square"/><path d="M1355.28 343.8h0M1361.16 343.8h0M1364.1 343.8h0M1367.05 343.8h0M1369.99 343.8h0M1372.93 343.8h0M1375.87 343.8h0M1378.81 343.8h0M1381.75 343.8h0M1384.69 343.8h0M1390.57 343.8h0M1396.45 343.8h0M1399.39 343.8h0M1402.33 343.8h0M1405.27 343.8h0M1408.21 343.8h0M1411.15 343.8h0M1414.1 343.8h0M1419.98 343.8h0M1422.92 343.8h0M1425.86 343.8h0M1428.8 343.8h0M1431.74 343.8h0M1434.68 343.8h0M1437.62 343.8h0M1440.56 343.8h0M1443.5 343.8h0M1449.38 343.8h0M1452.32 343.8h0M1455.26 343.8h0M1458.2 343.8h0M1461.14 343.8h0M1464.09 343.8h0M1467.03 343.8h0M1469.97 343.8h0M1472.91 343.8h0M1478.79 343.8h0M1481.73 343.8h0M1484.67 343.8h0M1487.61 343.8h0M1490.55 343.8h0M1493.49 343.8h0M1496.43 343.8h0M1499.37 343.8h0M1502.31 343.8h0M1505.25 343.8h0M1511.13 343.8h0M1514.08 343.8h0M1517.02 343.8h0M1519.96 343.8h0M1522.9 343.8h0M1525.84 343.8h0M1528.78 343.8h0M1531.72 343.8h0M1534.66 343.8h0" stroke="#414c53" stroke-width="1.5" stroke-linecap="square"/><path d="M1240.6 343.8h0M1243.54 343.8h0M1246.48 343.8h0M1249.42 343.8h0M1255.3 343.8h0M1258.24 343.8h0M1261.18 343.8h0M1264.12 343.8h0M1267.07 343.8h0M1272.95 343.8h0M1275.89 343.8h0M1278.83 343.8h0M1281.77 343.8h0M1284.71 343.8h0M1287.65 343.8h0M1290.59 343.8h0M1293.53 343.8h0M1296.47 343.8h0M1302.35 343.8h0M1305.29 343.8h0M1308.23 343.8h0M1311.17 343.8h0M1314.11 343.8h0M1317.06 343.8h0M1320 343.8h0M1322.94 343.8h0M1325.88 343.8h0M1331.76 343.8h0M1334.7 343.8h0M1337.64 343.8h0M1340.58 343.8h0M1343.52 343.8h0M1346.46 343.8h0M1349.4 343.8h0M1352.34 343.8h0" stroke="#f7c600" stroke-width="2.1" stroke-linecap="square"/><path d="M1252.36 343.8h0M1270.01 343.8h0M1299.41 343.8h0M1328.82 343.8h0M1358.22 343.8h0M1387.63 343.8h0M1417.04 343.8h0M1446.44 343.8h0M1475.85 343.8h0M1508.19 343.8h0M1537.6 343.8h0" stroke="#fff" stroke-width="2.1" stroke-linecap="square"/><path d="M1393.51 343.8h0" stroke="#f01818" stroke-width="2.1" stroke-linecap="square"/><text x="1252" y="340.3" font-size="6.3" fill="#fff" font-weight="bold" text-anchor="middle">-30</text><text x="1270" y="340.3" font-size="6.3" fill="#fff" font-weight="bold" text-anchor="middle">-18</text><text x="1300" y="340.3" font-size="6.3" fill="#fff" font-weight="bold" text-anchor="middle">-6</text><text x="1329" y="340.3" font-size="6.3" fill="#fff" font-weight="bold" text-anchor="middle">-4</text><text x="1358" y="340.3" font-size="6.3" fill="#fff" font-weight="bold" text-anchor="middle">-2</text><text x="1389" y="340.3" font-size="6.3" fill="#fff" font-weight="bold" text-anchor="middle">0</text><text x="1418" y="340.3" font-size="6.3" fill="#fff" font-weight="bold" text-anchor="middle">+2</text><text x="1447" y="340.3" font-size="6.3" fill="#fff" font-weight="bold" text-anchor="middle">+4</text><text x="1477" y="340.3" font-size="6.3" fill="#fff" font-weight="bold" text-anchor="middle">+6</text><text x="1508" y="340.3" font-size="6.3" fill="#fff" font-weight="bold" text-anchor="middle">+12</text><text x="1537.6" y="340.3" font-size="6.3" fill="#fff" font-weight="bold" text-anchor="middle">+18</text><rect x="386" y="354.2" width="124" height="8.4" fill="url(#tg)"/><text x="448" y="361.2" text-anchor="middle" class="tt">MEDIA PLAYER</text><rect x="386" y="364.5" width="124" height="40.80000000000001" fill="#1a2227"/><rect x="388.7" y="370.5" width="10.2" height="10.2" rx="1" fill="#34434a"/><rect x="403.6" y="370.5" width="4" height="10.2" rx="0.8" fill="#34434a"/><rect x="410.6" y="370.5" width="4" height="10.2" rx="0.8" fill="#34434a"/><path d="M417.8 369.8l11 5.8-11 5.8z" fill="#f5a81c"/><circle cx="447.5" cy="371.5" r="3.6" fill="none" stroke="#34434a" stroke-width="1.4"/><circle cx="447.5" cy="371.5" r="1.3" fill="#34434a"/><text x="447.5" y="383" font-size="5.8" fill="#8a98a0" font-weight="bold" text-anchor="middle" textLength="27" lengthAdjust="spacingAndGlyphs">SHUFFLE</text><circle cx="472.5" cy="371.5" r="3.6" fill="none" stroke="#34434a" stroke-width="1.4"/><circle cx="472.5" cy="371.5" r="1.3" fill="#34434a"/><text x="472.5" y="383" font-size="5.8" fill="#8a98a0" font-weight="bold" text-anchor="middle" textLength="15" lengthAdjust="spacingAndGlyphs">DATE</text><circle cx="494.5" cy="371.5" r="3.6" fill="none" stroke="#f5a81c" stroke-width="1.4"/><circle cx="494.5" cy="371.5" r="1.3" fill="#f5a81c"/><text x="494.5" y="383" font-size="5.8" fill="#cdd5d9" font-weight="bold" text-anchor="middle" textLength="17" lengthAdjust="spacingAndGlyphs">NAME</text><text x="391" y="398.5" font-size="6.8" fill="#d0d5d8" font-weight="bold" text-anchor="start" textLength="13.5" lengthAdjust="spacingAndGlyphs">INF.</text><rect x="517" y="354.2" width="253.5" height="8.4" fill="url(#tg)"/><text x="643.6" y="361.2" text-anchor="middle" class="tt">AUDIO STREAMING DECODER</text><rect x="517" y="364.5" width="253.5" height="40.80000000000001" fill="#1a2227"/><text x="519.5" y="379" font-size="6.8" fill="#d0d5d8" font-weight="bold" text-anchor="start" textLength="26" lengthAdjust="spacingAndGlyphs">STATUS</text><text x="526" y="399" font-size="6.8" fill="#d0d5d8" font-weight="bold" text-anchor="start" textLength="19.5" lengthAdjust="spacingAndGlyphs">PROT.</text><text x="638.5" y="376.5" font-size="6.5" fill="#d0d5d8" font-weight="bold" text-anchor="start" textLength="17" lengthAdjust="spacingAndGlyphs">RATE</text><text x="638.5" y="383" font-size="6.5" fill="#d0d5d8" font-weight="bold" text-anchor="start" textLength="17" lengthAdjust="spacingAndGlyphs">kBits</text><text x="638.5" y="399" font-size="6.8" fill="#d0d5d8" font-weight="bold" text-anchor="start" textLength="16" lengthAdjust="spacingAndGlyphs">DEC.</text><circle cx="714.7" cy="371.3" r="2.5" fill="#34434a"/><circle cx="714.7" cy="381.3" r="2.5" fill="#34434a"/><circle cx="714.7" cy="392" r="2.5" fill="#34434a"/><circle cx="714.7" cy="402" r="2.5" fill="#34434a"/><circle cx="738.5" cy="392" r="2.5" fill="#34434a"/><circle cx="738.5" cy="402" r="2.5" fill="#34434a"/><text x="720.5" y="373.8" font-size="6.3" fill="#d0d5d8" font-weight="bold" text-anchor="start" textLength="21" lengthAdjust="spacingAndGlyphs">MONO</text><text x="720.5" y="384" font-size="6.3" fill="#d0d5d8" font-weight="bold" text-anchor="start" textLength="26" lengthAdjust="spacingAndGlyphs">STEREO</text><text x="720.5" y="394.5" font-size="6.3" fill="#d0d5d8" font-weight="bold" text-anchor="start">16</text><text x="720.5" y="404.3" font-size="6.3" fill="#d0d5d8" font-weight="bold" text-anchor="start">32</text><text x="744" y="394.5" font-size="5.8" fill="#d0d5d8" font-weight="bold" text-anchor="start" textLength="20" lengthAdjust="spacingAndGlyphs">44 kHz</text><text x="744" y="404.3" font-size="5.8" fill="#d0d5d8" font-weight="bold" text-anchor="start" textLength="20" lengthAdjust="spacingAndGlyphs">48 kHz</text><rect x="778" y="354.2" width="123" height="8.4" fill="url(#tg)"/><text x="839.5" y="361.2" text-anchor="middle" class="tt">MULTIMEDIA-CHANGEOVER</text><rect x="778" y="364.5" width="123" height="40.80000000000001" fill="#1a2227"/><rect x="828" y="366" width="22.5" height="8.5" rx="1.5" fill="none" stroke="#333d42" stroke-width="1"/><rect x="853.5" y="366" width="19" height="8.5" rx="1.5" fill="none" stroke="#e39a1b" stroke-width="1.1"/><text x="839" y="373" font-size="6.5" fill="#333d42" font-weight="bold" text-anchor="middle" textLength="17" lengthAdjust="spacingAndGlyphs">AUTO</text><text x="863" y="373" font-size="6.5" fill="#e39a1b" font-weight="bold" text-anchor="middle" textLength="13" lengthAdjust="spacingAndGlyphs">MAN</text><rect x="778.5" y="376.3" width="22" height="8.8" rx="1.3" fill="none" stroke="#e39a1b" stroke-width="1"/><text x="789.5" y="383.3" font-size="6.2" fill="#e39a1b" font-weight="bold" text-anchor="middle" textLength="18" lengthAdjust="spacingAndGlyphs">DEC-1</text><rect x="778.5" y="386.6" width="22" height="8.8" rx="1.3" fill="none" stroke="#e39a1b" stroke-width="1"/><text x="789.5" y="393.6" font-size="6.2" fill="#e39a1b" font-weight="bold" text-anchor="middle" textLength="18" lengthAdjust="spacingAndGlyphs">DEC-2</text><rect x="778.5" y="396.9" width="22" height="8.8" rx="1.3" fill="none" stroke="#e39a1b" stroke-width="1"/><text x="789.5" y="403.9" font-size="6.2" fill="#e39a1b" font-weight="bold" text-anchor="middle" textLength="18" lengthAdjust="spacingAndGlyphs">PLAYER</text><path d="M801 380.5c2.5 0 3 0.5 5.5 0.5M801 391c2.5 0 3-2.4 5.5-2.4M801 401.5c4 0 4-4 8.5-5.5" stroke="#dfe3e5" stroke-width="0.9" fill="none"/><g fill="#1a2227" stroke="#eef0f1" stroke-width="1.4"><circle cx="808.8" cy="381" r="2.4"/><circle cx="808.8" cy="388.6" r="2.4"/><circle cx="812" cy="396" r="2.4"/><circle cx="825.5" cy="385" r="2.4"/></g><path d="M813.5 394.5l10-8M828 385h5" stroke="#eef0f1" stroke-width="1.3"/><text x="835.5" y="387.5" font-size="6.6" fill="#d6dbde" font-weight="bold" text-anchor="start" textLength="62" lengthAdjust="spacingAndGlyphs">MULTIMEDIA-OUT.</text><rect x="908" y="354.2" width="253.5" height="8.4" fill="url(#tg)"/><text x="1034.5" y="361.2" text-anchor="middle" class="tt">AUDIO STREAMING ENCODER</text><rect x="908" y="364.5" width="253.5" height="40.80000000000001" fill="#1a2227"/><text x="910.5" y="379.5" font-size="6.8" fill="#d0d5d8" font-weight="bold" text-anchor="start" textLength="27" lengthAdjust="spacingAndGlyphs">STATUS</text><text x="917" y="399.5" font-size="6.8" fill="#d0d5d8" font-weight="bold" text-anchor="start" textLength="20" lengthAdjust="spacingAndGlyphs">PROT.</text><text x="1030" y="377" font-size="6.5" fill="#d0d5d8" font-weight="bold" text-anchor="start" textLength="17" lengthAdjust="spacingAndGlyphs">RATE</text><text x="1030" y="383.5" font-size="6.5" fill="#d0d5d8" font-weight="bold" text-anchor="start" textLength="17" lengthAdjust="spacingAndGlyphs">kBits</text><text x="1031" y="399.5" font-size="6.8" fill="#d0d5d8" font-weight="bold" text-anchor="start" textLength="15" lengthAdjust="spacingAndGlyphs">ENC.</text><rect x="1111" y="367.5" width="37.5" height="16" rx="2" fill="#3c4a53" stroke="#e39a1b" stroke-width="1.2"/><path d="M1125.5 371.5l8.5 4.5-8.5 4.5z" fill="#fff"/><circle cx="1106.4" cy="391.5" r="2.6" fill="#34434a"/><circle cx="1106.4" cy="401.5" r="2.6" fill="#f5a81c"/><circle cx="1130.3" cy="391.5" r="2.6" fill="#34434a"/><circle cx="1130.3" cy="401.5" r="2.6" fill="#34434a"/><text x="1112" y="394" font-size="6.3" fill="#d0d5d8" font-weight="bold" text-anchor="start">16</text><text x="1112" y="404" font-size="6.3" fill="#d0d5d8" font-weight="bold" text-anchor="start">32</text><text x="1136" y="394" font-size="5.8" fill="#d0d5d8" font-weight="bold" text-anchor="start" textLength="20" lengthAdjust="spacingAndGlyphs">44 kHz</text><text x="1136" y="404" font-size="5.8" fill="#d0d5d8" font-weight="bold" text-anchor="start" textLength="20" lengthAdjust="spacingAndGlyphs">48 kHz</text><rect x="1212" y="354.2" width="351" height="8.4" fill="url(#tg)"/><text x="1387.5" y="361.2" text-anchor="middle" class="tt">MULTIMEDIA AUDIO OUTPUT</text><rect x="1212" y="364.5" width="351" height="40.80000000000001" fill="#1a2227"/><text x="1217" y="377.5" font-size="6.8" fill="#d0d5d8" font-weight="bold" text-anchor="start" textLength="17" lengthAdjust="spacingAndGlyphs">INFO</text><text x="1217" y="392" font-size="6.5" fill="#d0d5d8" font-weight="bold" text-anchor="start" textLength="14.5" lengthAdjust="spacingAndGlyphs">LEFT</text><text x="1217" y="403" font-size="6.5" fill="#d0d5d8" font-weight="bold" text-anchor="start" textLength="19" lengthAdjust="spacingAndGlyphs">RIGHT</text><path d="M1361.16 389.6h0M1364.1 389.6h0M1367.05 389.6h0M1369.99 389.6h0M1372.93 389.6h0M1375.87 389.6h0M1378.81 389.6h0M1381.75 389.6h0M1384.69 389.6h0M1390.57 389.6h0M1393.51 389.6h0M1396.45 389.6h0M1399.39 389.6h0M1405.27 389.6h0M1408.21 389.6h0M1411.15 389.6h0M1414.1 389.6h0M1419.98 389.6h0M1422.92 389.6h0M1425.86 389.6h0M1428.8 389.6h0M1431.74 389.6h0M1434.68 389.6h0M1437.62 389.6h0M1440.56 389.6h0M1443.5 389.6h0M1449.38 389.6h0M1452.32 389.6h0M1455.26 389.6h0M1458.2 389.6h0M1461.14 389.6h0M1464.09 389.6h0M1467.03 389.6h0M1469.97 389.6h0M1472.91 389.6h0M1478.79 389.6h0M1481.73 389.6h0M1484.67 389.6h0M1487.61 389.6h0M1490.55 389.6h0M1493.49 389.6h0M1496.43 389.6h0M1499.37 389.6h0M1502.31 389.6h0M1505.25 389.6h0M1511.13 389.6h0M1514.08 389.6h0M1517.02 389.6h0M1519.96 389.6h0M1522.9 389.6h0M1525.84 389.6h0M1528.78 389.6h0M1531.72 389.6h0M1534.66 389.6h0" stroke="#414c53" stroke-width="1.5" stroke-linecap="square"/><path d="M1240.6 389.6h0M1243.54 389.6h0M1246.48 389.6h0M1249.42 389.6h0M1255.3 389.6h0M1258.24 389.6h0M1261.18 389.6h0M1264.12 389.6h0M1267.07 389.6h0M1272.95 389.6h0M1275.89 389.6h0M1278.83 389.6h0M1281.77 389.6h0M1284.71 389.6h0M1287.65 389.6h0M1290.59 389.6h0M1293.53 389.6h0M1296.47 389.6h0M1302.35 389.6h0M1305.29 389.6h0M1308.23 389.6h0M1311.17 389.6h0M1314.11 389.6h0M1317.06 389.6h0M1320 389.6h0M1322.94 389.6h0M1325.88 389.6h0M1331.76 389.6h0M1334.7 389.6h0M1337.64 389.6h0M1340.58 389.6h0M1343.52 389.6h0M1346.46 389.6h0M1349.4 389.6h0M1352.34 389.6h0M1355.28 389.6h0" stroke="#f7c600" stroke-width="2.1" stroke-linecap="square"/><path d="M1252.36 389.6h0M1270.01 389.6h0M1299.41 389.6h0M1328.82 389.6h0M1358.22 389.6h0M1387.63 389.6h0M1417.04 389.6h0M1446.44 389.6h0M1475.85 389.6h0M1508.19 389.6h0M1537.6 389.6h0" stroke="#fff" stroke-width="2.1" stroke-linecap="square"/><path d="M1402.33 389.6h0" stroke="#f01818" stroke-width="2.1" stroke-linecap="square"/><path d="M1361.16 400.7h0M1364.1 400.7h0M1367.05 400.7h0M1369.99 400.7h0M1372.93 400.7h0M1375.87 400.7h0M1378.81 400.7h0M1381.75 400.7h0M1384.69 400.7h0M1390.57 400.7h0M1393.51 400.7h0M1399.39 400.7h0M1402.33 400.7h0M1405.27 400.7h0M1408.21 400.7h0M1411.15 400.7h0M1414.1 400.7h0M1419.98 400.7h0M1422.92 400.7h0M1425.86 400.7h0M1428.8 400.7h0M1431.74 400.7h0M1434.68 400.7h0M1437.62 400.7h0M1440.56 400.7h0M1443.5 400.7h0M1449.38 400.7h0M1452.32 400.7h0M1455.26 400.7h0M1458.2 400.7h0M1461.14 400.7h0M1464.09 400.7h0M1467.03 400.7h0M1469.97 400.7h0M1472.91 400.7h0M1478.79 400.7h0M1481.73 400.7h0M1484.67 400.7h0M1487.61 400.7h0M1490.55 400.7h0M1493.49 400.7h0M1496.43 400.7h0M1499.37 400.7h0M1502.31 400.7h0M1505.25 400.7h0M1511.13 400.7h0M1514.08 400.7h0M1517.02 400.7h0M1519.96 400.7h0M1522.9 400.7h0M1525.84 400.7h0M1528.78 400.7h0M1531.72 400.7h0M1534.66 400.7h0" stroke="#414c53" stroke-width="1.5" stroke-linecap="square"/><path d="M1240.6 400.7h0M1243.54 400.7h0M1246.48 400.7h0M1249.42 400.7h0M1255.3 400.7h0M1258.24 400.7h0M1261.18 400.7h0M1264.12 400.7h0M1267.07 400.7h0M1272.95 400.7h0M1275.89 400.7h0M1278.83 400.7h0M1281.77 400.7h0M1284.71 400.7h0M1287.65 400.7h0M1290.59 400.7h0M1293.53 400.7h0M1296.47 400.7h0M1302.35 400.7h0M1305.29 400.7h0M1308.23 400.7h0M1311.17 400.7h0M1314.11 400.7h0M1317.06 400.7h0M1320 400.7h0M1322.94 400.7h0M1325.88 400.7h0M1331.76 400.7h0M1334.7 400.7h0M1337.64 400.7h0M1340.58 400.7h0M1343.52 400.7h0M1346.46 400.7h0M1349.4 400.7h0M1352.34 400.7h0M1355.28 400.7h0" stroke="#f7c600" stroke-width="2.1" stroke-linecap="square"/><path d="M1252.36 400.7h0M1270.01 400.7h0M1299.41 400.7h0M1328.82 400.7h0M1358.22 400.7h0M1387.63 400.7h0M1417.04 400.7h0M1446.44 400.7h0M1475.85 400.7h0M1508.19 400.7h0M1537.6 400.7h0" stroke="#fff" stroke-width="2.1" stroke-linecap="square"/><path d="M1396.45 400.7h0" stroke="#f01818" stroke-width="2.1" stroke-linecap="square"/><text x="1252" y="397.5" font-size="6.3" fill="#fff" font-weight="bold" text-anchor="middle">-30</text><text x="1270" y="397.5" font-size="6.3" fill="#fff" font-weight="bold" text-anchor="middle">-18</text><text x="1300" y="397.5" font-size="6.3" fill="#fff" font-weight="bold" text-anchor="middle">-6</text><text x="1329" y="397.5" font-size="6.3" fill="#fff" font-weight="bold" text-anchor="middle">-4</text><text x="1358" y="397.5" font-size="6.3" fill="#fff" font-weight="bold" text-anchor="middle">-2</text><text x="1389" y="397.5" font-size="6.3" fill="#fff" font-weight="bold" text-anchor="middle">0</text><text x="1418" y="397.5" font-size="6.3" fill="#fff" font-weight="bold" text-anchor="middle">+2</text><text x="1447" y="397.5" font-size="6.3" fill="#fff" font-weight="bold" text-anchor="middle">+4</text><text x="1477" y="397.5" font-size="6.3" fill="#fff" font-weight="bold" text-anchor="middle">+6</text><text x="1508" y="397.5" font-size="6.3" fill="#fff" font-weight="bold" text-anchor="middle">+12</text><text x="1537.6" y="397.5" font-size="6.3" fill="#fff" font-weight="bold" text-anchor="middle">+18</text><rect x="520" y="195" width="117" height="17" fill="url(#lg)"/><rect x="520" y="215" width="117" height="17" fill="url(#lg)"/><rect x="649" y="195" width="97" height="17" fill="url(#lg)"/><rect x="649" y="215" width="97" height="17" fill="url(#lg)"/><rect x="420" y="253" width="80" height="18" fill="url(#lg)"/><rect x="536" y="253.6" width="45" height="17" fill="url(#lg)"/><rect x="536" y="273.6" width="45" height="17" fill="url(#lg)"/><rect x="662.5" y="253.6" width="45" height="17" fill="url(#lg)"/><rect x="662.5" y="273.6" width="45" height="17" fill="url(#lg)"/><rect x="929" y="253" width="229" height="18" fill="url(#lg)"/><rect x="1239.4" y="253" width="320.6" height="17.5" fill="url(#lg)"/><rect x="409" y="310.3" width="225" height="17.7" fill="url(#lg)"/><rect x="662" y="310.3" width="108" height="17.7" fill="url(#lg)"/><rect x="793" y="310.3" width="108" height="17.7" fill="url(#lg)"/><rect x="1239.4" y="310" width="320.6" height="17" fill="url(#lg)"/><rect x="408" y="386.5" width="98" height="18.5" fill="url(#lg)"/><rect x="551" y="367.5" width="81" height="17" fill="url(#lg)"/><rect x="551" y="387.5" width="81" height="17" fill="url(#lg)"/><rect x="662" y="367.5" width="46.5" height="17" fill="url(#lg)"/><rect x="662" y="387.5" width="46.5" height="17" fill="url(#lg)"/><rect x="1053" y="367" width="47" height="17.5" fill="url(#lg)"/><rect x="1053" y="387" width="47" height="17.5" fill="url(#lg)"/><rect x="1239.4" y="367" width="320.6" height="17.5" fill="url(#lg)"/><path d="M531.3 196.8h0M533.55 196.8h0M535.8 196.8h0M538.05 196.8h0M531.3 199.05h0M540.3 199.05h0M531.3 201.3h0M540.3 201.3h0M531.3 203.55h0M540.3 203.55h0M531.3 205.8h0M540.3 205.8h0M531.3 208.05h0M540.3 208.05h0M531.3 210.3h0M533.55 210.3h0M535.8 210.3h0M538.05 210.3h0M545.6 196.8h0M547.85 196.8h0M550.1 196.8h0M547.85 199.05h0M547.85 201.3h0M547.85 203.55h0M547.85 205.8h0M547.85 208.05h0M545.6 210.3h0M547.85 210.3h0M550.1 210.3h0M557.65 196.8h0M559.9 196.8h0M562.15 196.8h0M555.4 199.05h0M564.4 199.05h0M555.4 201.3h0M555.4 203.55h0M559.9 203.55h0M562.15 203.55h0M564.4 203.55h0M555.4 205.8h0M564.4 205.8h0M555.4 208.05h0M564.4 208.05h0M557.65 210.3h0M559.9 210.3h0M562.15 210.3h0M564.4 210.3h0M567.45 203.55h0M569.7 203.55h0M571.95 203.55h0M574.2 203.55h0M581.75 203.55h0M584 203.55h0M586.25 203.55h0M588.5 203.55h0M593.8 196.8h0M596.05 196.8h0M598.3 196.8h0M596.05 199.05h0M596.05 201.3h0M596.05 203.55h0M596.05 205.8h0M596.05 208.05h0M593.8 210.3h0M596.05 210.3h0M598.3 210.3h0M603.6 196.8h0M612.6 196.8h0M603.6 199.05h0M612.6 199.05h0M603.6 201.3h0M605.85 201.3h0M612.6 201.3h0M603.6 203.55h0M608.1 203.55h0M612.6 203.55h0M603.6 205.8h0M610.35 205.8h0M612.6 205.8h0M603.6 208.05h0M612.6 208.05h0M603.6 210.3h0M612.6 210.3h0M615.65 196.8h0M617.9 196.8h0M620.15 196.8h0M622.4 196.8h0M615.65 199.05h0M624.65 199.05h0M615.65 201.3h0M624.65 201.3h0M615.65 203.55h0M617.9 203.55h0M620.15 203.55h0M622.4 203.55h0M615.65 205.8h0M615.65 208.05h0M615.65 210.3h0M545.75 216.8h0M548 216.8h0M550.25 216.8h0M543.5 219.05h0M552.5 219.05h0M543.5 221.3h0M552.5 221.3h0M543.5 223.55h0M552.5 223.55h0M543.5 225.8h0M545.75 225.8h0M548 225.8h0M550.25 225.8h0M552.5 225.8h0M543.5 228.05h0M552.5 228.05h0M543.5 230.3h0M552.5 230.3h0M555.55 216.8h0M555.55 219.05h0M555.55 221.3h0M555.55 223.55h0M555.55 225.8h0M555.55 228.05h0M555.55 230.3h0M557.8 230.3h0M560.05 230.3h0M562.3 230.3h0M564.55 230.3h0M569.85 216.8h0M572.1 216.8h0M574.35 216.8h0M567.6 219.05h0M576.6 219.05h0M567.6 221.3h0M576.6 221.3h0M567.6 223.55h0M576.6 223.55h0M567.6 225.8h0M569.85 225.8h0M572.1 225.8h0M574.35 225.8h0M576.6 225.8h0M567.6 228.05h0M576.6 228.05h0M567.6 230.3h0M576.6 230.3h0M579.65 216.8h0M581.9 216.8h0M584.15 216.8h0M586.4 216.8h0M579.65 219.05h0M588.65 219.05h0M579.65 221.3h0M588.65 221.3h0M579.65 223.55h0M581.9 223.55h0M584.15 223.55h0M586.4 223.55h0M579.65 225.8h0M584.15 225.8h0M579.65 228.05h0M586.4 228.05h0M579.65 230.3h0M588.65 230.3h0M591.7 216.8h0M600.7 216.8h0M591.7 219.05h0M593.95 219.05h0M598.45 219.05h0M600.7 219.05h0M591.7 221.3h0M596.2 221.3h0M600.7 221.3h0M591.7 223.55h0M596.2 223.55h0M600.7 223.55h0M591.7 225.8h0M600.7 225.8h0M591.7 228.05h0M600.7 228.05h0M591.7 230.3h0M600.7 230.3h0M652.55 196.8h0M654.8 196.8h0M657.05 196.8h0M650.3 199.05h0M659.3 199.05h0M659.3 201.3h0M657.05 203.55h0M654.8 205.8h0M652.55 208.05h0M650.3 210.3h0M652.55 210.3h0M654.8 210.3h0M657.05 210.3h0M659.3 210.3h0M666.85 196.8h0M669.1 196.8h0M664.6 199.05h0M662.35 201.3h0M662.35 203.55h0M664.6 203.55h0M666.85 203.55h0M669.1 203.55h0M662.35 205.8h0M671.35 205.8h0M662.35 208.05h0M671.35 208.05h0M664.6 210.3h0M666.85 210.3h0M669.1 210.3h0M674.4 203.55h0M676.65 203.55h0M678.9 203.55h0M681.15 203.55h0M683.4 203.55h0M688.7 196.8h0M690.95 196.8h0M693.2 196.8h0M686.45 199.05h0M695.45 199.05h0M686.45 201.3h0M693.2 201.3h0M695.45 201.3h0M686.45 203.55h0M690.95 203.55h0M695.45 203.55h0M686.45 205.8h0M688.7 205.8h0M695.45 205.8h0M686.45 208.05h0M695.45 208.05h0M688.7 210.3h0M690.95 210.3h0M693.2 210.3h0M698.5 196.8h0M700.75 196.8h0M703 196.8h0M705.25 196.8h0M707.5 196.8h0M698.5 199.05h0M698.5 201.3h0M700.75 201.3h0M703 201.3h0M705.25 201.3h0M707.5 203.55h0M707.5 205.8h0M698.5 208.05h0M707.5 208.05h0M700.75 210.3h0M703 210.3h0M705.25 210.3h0M710.55 203.55h0M712.8 203.55h0M715.05 203.55h0M717.3 203.55h0M719.55 203.55h0M724.85 196.8h0M727.1 196.8h0M729.35 196.8h0M722.6 199.05h0M731.6 199.05h0M731.6 201.3h0M729.35 203.55h0M727.1 205.8h0M724.85 208.05h0M722.6 210.3h0M724.85 210.3h0M727.1 210.3h0M729.35 210.3h0M731.6 210.3h0M736.9 196.8h0M739.15 196.8h0M741.4 196.8h0M734.65 199.05h0M743.65 199.05h0M743.65 201.3h0M741.4 203.55h0M739.15 205.8h0M736.9 208.05h0M734.65 210.3h0M736.9 210.3h0M739.15 210.3h0M741.4 210.3h0M743.65 210.3h0M655.1 216.8h0M652.85 219.05h0M655.1 219.05h0M655.1 221.3h0M655.1 223.55h0M655.1 225.8h0M655.1 228.05h0M652.85 230.3h0M655.1 230.3h0M657.35 230.3h0M662.65 216.8h0M664.9 216.8h0M667.15 216.8h0M669.4 216.8h0M671.65 216.8h0M662.65 219.05h0M662.65 221.3h0M664.9 221.3h0M667.15 221.3h0M669.4 221.3h0M671.65 223.55h0M671.65 225.8h0M662.65 228.05h0M671.65 228.05h0M664.9 230.3h0M667.15 230.3h0M669.4 230.3h0M676.95 219.05h0M679.2 219.05h0M676.95 221.3h0M679.2 221.3h0M676.95 225.8h0M679.2 225.8h0M676.95 228.05h0M679.2 228.05h0M691.25 216.8h0M689 219.05h0M691.25 219.05h0M691.25 221.3h0M691.25 223.55h0M691.25 225.8h0M691.25 228.05h0M689 230.3h0M691.25 230.3h0M693.5 230.3h0M701.05 216.8h0M703.3 216.8h0M705.55 216.8h0M698.8 219.05h0M707.8 219.05h0M698.8 221.3h0M707.8 221.3h0M701.05 223.55h0M703.3 223.55h0M705.55 223.55h0M707.8 223.55h0M707.8 225.8h0M705.55 228.05h0M701.05 230.3h0M703.3 230.3h0M713.1 219.05h0M715.35 219.05h0M713.1 221.3h0M715.35 221.3h0M713.1 225.8h0M715.35 225.8h0M713.1 228.05h0M715.35 228.05h0M722.9 216.8h0M725.15 216.8h0M727.4 216.8h0M729.65 216.8h0M731.9 216.8h0M729.65 219.05h0M727.4 221.3h0M729.65 223.55h0M731.9 225.8h0M722.9 228.05h0M731.9 228.05h0M725.15 230.3h0M727.4 230.3h0M729.65 230.3h0M734.95 216.8h0M737.2 216.8h0M739.45 216.8h0M741.7 216.8h0M743.95 216.8h0M741.7 219.05h0M739.45 221.3h0M741.7 223.55h0M743.95 225.8h0M734.95 228.05h0M743.95 228.05h0M737.2 230.3h0M739.45 230.3h0M741.7 230.3h0M428.25 255.3h0M430.5 255.3h0M432.75 255.3h0M426 257.55h0M435 257.55h0M426 259.8h0M435 259.8h0M426 262.05h0M435 262.05h0M426 264.3h0M428.25 264.3h0M430.5 264.3h0M432.75 264.3h0M435 264.3h0M426 266.55h0M435 266.55h0M426 268.8h0M435 268.8h0M438.05 255.3h0M447.05 255.3h0M438.05 257.55h0M447.05 257.55h0M438.05 259.8h0M447.05 259.8h0M438.05 262.05h0M447.05 262.05h0M438.05 264.3h0M447.05 264.3h0M438.05 266.55h0M447.05 266.55h0M440.3 268.8h0M442.55 268.8h0M444.8 268.8h0M450.1 255.3h0M452.35 255.3h0M454.6 255.3h0M456.85 255.3h0M450.1 257.55h0M459.1 257.55h0M450.1 259.8h0M459.1 259.8h0M450.1 262.05h0M459.1 262.05h0M450.1 264.3h0M459.1 264.3h0M450.1 266.55h0M459.1 266.55h0M450.1 268.8h0M452.35 268.8h0M454.6 268.8h0M456.85 268.8h0M464.4 255.3h0M466.65 255.3h0M468.9 255.3h0M471.15 255.3h0M462.15 257.55h0M462.15 259.8h0M464.4 262.05h0M466.65 262.05h0M468.9 262.05h0M471.15 264.3h0M471.15 266.55h0M462.15 268.8h0M464.4 268.8h0M466.65 268.8h0M468.9 268.8h0M474.2 255.3h0M476.45 255.3h0M478.7 255.3h0M480.95 255.3h0M483.2 255.3h0M474.2 257.55h0M474.2 259.8h0M474.2 262.05h0M476.45 262.05h0M478.7 262.05h0M480.95 262.05h0M474.2 264.3h0M474.2 266.55h0M474.2 268.8h0M476.45 268.8h0M478.7 268.8h0M480.95 268.8h0M483.2 268.8h0M486.25 255.3h0M486.25 257.55h0M486.25 259.8h0M486.25 262.05h0M486.25 264.3h0M486.25 266.55h0M486.25 268.8h0M488.5 268.8h0M490.75 268.8h0M493 268.8h0M495.25 268.8h0M540.45 255.2h0M542.7 255.2h0M544.95 255.2h0M538.2 257.45h0M547.2 257.45h0M538.2 259.7h0M547.2 259.7h0M538.2 261.95h0M547.2 261.95h0M538.2 264.2h0M540.45 264.2h0M542.7 264.2h0M544.95 264.2h0M547.2 264.2h0M538.2 266.45h0M547.2 266.45h0M538.2 268.7h0M547.2 268.7h0M550.25 255.2h0M559.25 255.2h0M550.25 257.45h0M559.25 257.45h0M550.25 259.7h0M552.5 259.7h0M559.25 259.7h0M550.25 261.95h0M554.75 261.95h0M559.25 261.95h0M550.25 264.2h0M557 264.2h0M559.25 264.2h0M550.25 266.45h0M559.25 266.45h0M550.25 268.7h0M559.25 268.7h0M562.3 255.2h0M562.3 257.45h0M562.3 259.7h0M562.3 261.95h0M562.3 264.2h0M562.3 266.45h0M562.3 268.7h0M564.55 268.7h0M566.8 268.7h0M569.05 268.7h0M571.3 268.7h0M538.2 275.2h0M540.45 275.2h0M542.7 275.2h0M544.95 275.2h0M538.2 277.45h0M547.2 277.45h0M538.2 279.7h0M547.2 279.7h0M538.2 281.95h0M547.2 281.95h0M538.2 284.2h0M547.2 284.2h0M538.2 286.45h0M547.2 286.45h0M538.2 288.7h0M540.45 288.7h0M542.7 288.7h0M544.95 288.7h0M552.5 275.2h0M554.75 275.2h0M557 275.2h0M554.75 277.45h0M554.75 279.7h0M554.75 281.95h0M554.75 284.2h0M554.75 286.45h0M552.5 288.7h0M554.75 288.7h0M557 288.7h0M564.55 275.2h0M566.8 275.2h0M569.05 275.2h0M562.3 277.45h0M571.3 277.45h0M562.3 279.7h0M562.3 281.95h0M566.8 281.95h0M569.05 281.95h0M571.3 281.95h0M562.3 284.2h0M571.3 284.2h0M562.3 286.45h0M571.3 286.45h0M564.55 288.7h0M566.8 288.7h0M569.05 288.7h0M571.3 288.7h0M664.7 255.2h0M666.95 255.2h0M669.2 255.2h0M671.45 255.2h0M664.7 257.45h0M673.7 257.45h0M664.7 259.7h0M673.7 259.7h0M664.7 261.95h0M673.7 261.95h0M664.7 264.2h0M673.7 264.2h0M664.7 266.45h0M673.7 266.45h0M664.7 268.7h0M666.95 268.7h0M669.2 268.7h0M671.45 268.7h0M679 255.2h0M681.25 255.2h0M683.5 255.2h0M676.75 257.45h0M685.75 257.45h0M676.75 259.7h0M676.75 261.95h0M681.25 261.95h0M683.5 261.95h0M685.75 261.95h0M676.75 264.2h0M685.75 264.2h0M676.75 266.45h0M685.75 266.45h0M679 268.7h0M681.25 268.7h0M683.5 268.7h0M685.75 268.7h0M691.05 255.2h0M693.3 255.2h0M695.55 255.2h0M688.8 257.45h0M697.8 257.45h0M697.8 259.7h0M695.55 261.95h0M693.3 264.2h0M691.05 266.45h0M688.8 268.7h0M691.05 268.7h0M693.3 268.7h0M695.55 268.7h0M697.8 268.7h0M664.7 275.2h0M673.7 275.2h0M664.7 277.45h0M666.95 277.45h0M671.45 277.45h0M673.7 277.45h0M664.7 279.7h0M669.2 279.7h0M673.7 279.7h0M664.7 281.95h0M669.2 281.95h0M673.7 281.95h0M664.7 284.2h0M673.7 284.2h0M664.7 286.45h0M673.7 286.45h0M664.7 288.7h0M673.7 288.7h0M676.75 275.2h0M679 275.2h0M681.25 275.2h0M683.5 275.2h0M685.75 275.2h0M676.75 277.45h0M676.75 279.7h0M676.75 281.95h0M679 281.95h0M681.25 281.95h0M683.5 281.95h0M676.75 284.2h0M676.75 286.45h0M676.75 288.7h0M679 288.7h0M681.25 288.7h0M683.5 288.7h0M685.75 288.7h0M688.8 275.2h0M691.05 275.2h0M693.3 275.2h0M695.55 275.2h0M688.8 277.45h0M697.8 277.45h0M688.8 279.7h0M697.8 279.7h0M688.8 281.95h0M697.8 281.95h0M688.8 284.2h0M697.8 284.2h0M688.8 286.45h0M697.8 286.45h0M688.8 288.7h0M691.05 288.7h0M693.3 288.7h0M695.55 288.7h0M931.7 255.6h0M940.7 255.6h0M931.7 257.85h0M933.95 257.85h0M938.45 257.85h0M940.7 257.85h0M931.7 260.1h0M936.2 260.1h0M940.7 260.1h0M931.7 262.35h0M936.2 262.35h0M940.7 262.35h0M931.7 264.6h0M940.7 264.6h0M931.7 266.85h0M940.7 266.85h0M931.7 269.1h0M940.7 269.1h0M943.75 255.6h0M946 255.6h0M948.25 255.6h0M950.5 255.6h0M952.75 255.6h0M943.75 257.85h0M943.75 260.1h0M943.75 262.35h0M946 262.35h0M948.25 262.35h0M950.5 262.35h0M943.75 264.6h0M943.75 266.85h0M943.75 269.1h0M946 269.1h0M948.25 269.1h0M950.5 269.1h0M952.75 269.1h0M955.8 255.6h0M958.05 255.6h0M960.3 255.6h0M962.55 255.6h0M955.8 257.85h0M964.8 257.85h0M955.8 260.1h0M964.8 260.1h0M955.8 262.35h0M964.8 262.35h0M955.8 264.6h0M964.8 264.6h0M955.8 266.85h0M964.8 266.85h0M955.8 269.1h0M958.05 269.1h0M960.3 269.1h0M962.55 269.1h0M970.1 255.6h0M972.35 255.6h0M974.6 255.6h0M972.35 257.85h0M972.35 260.1h0M972.35 262.35h0M972.35 264.6h0M972.35 266.85h0M970.1 269.1h0M972.35 269.1h0M974.6 269.1h0M982.15 255.6h0M984.4 255.6h0M986.65 255.6h0M979.9 257.85h0M988.9 257.85h0M979.9 260.1h0M988.9 260.1h0M979.9 262.35h0M988.9 262.35h0M979.9 264.6h0M982.15 264.6h0M984.4 264.6h0M986.65 264.6h0M988.9 264.6h0M979.9 266.85h0M988.9 266.85h0M979.9 269.1h0M988.9 269.1h0M1006.25 255.6h0M1008.5 255.6h0M1010.75 255.6h0M1008.5 257.85h0M1008.5 260.1h0M1008.5 262.35h0M1008.5 264.6h0M1008.5 266.85h0M1006.25 269.1h0M1008.5 269.1h0M1010.75 269.1h0M1016.05 255.6h0M1025.05 255.6h0M1016.05 257.85h0M1025.05 257.85h0M1016.05 260.1h0M1018.3 260.1h0M1025.05 260.1h0M1016.05 262.35h0M1020.55 262.35h0M1025.05 262.35h0M1016.05 264.6h0M1022.8 264.6h0M1025.05 264.6h0M1016.05 266.85h0M1025.05 266.85h0M1016.05 269.1h0M1025.05 269.1h0M1028.1 255.6h0M1030.35 255.6h0M1032.6 255.6h0M1034.85 255.6h0M1028.1 257.85h0M1037.1 257.85h0M1028.1 260.1h0M1037.1 260.1h0M1028.1 262.35h0M1030.35 262.35h0M1032.6 262.35h0M1034.85 262.35h0M1028.1 264.6h0M1028.1 266.85h0M1028.1 269.1h0M1058.95 255.6h0M1056.7 257.85h0M1054.45 260.1h0M1054.45 262.35h0M1054.45 264.6h0M1056.7 266.85h0M1058.95 269.1h0M1066.5 255.6h0M1068.75 255.6h0M1071 255.6h0M1064.25 257.85h0M1073.25 257.85h0M1064.25 260.1h0M1073.25 260.1h0M1064.25 262.35h0M1073.25 262.35h0M1064.25 264.6h0M1066.5 264.6h0M1068.75 264.6h0M1071 264.6h0M1073.25 264.6h0M1064.25 266.85h0M1073.25 266.85h0M1064.25 269.1h0M1073.25 269.1h0M1076.3 255.6h0M1085.3 255.6h0M1076.3 257.85h0M1085.3 257.85h0M1076.3 260.1h0M1085.3 260.1h0M1076.3 262.35h0M1085.3 262.35h0M1076.3 264.6h0M1085.3 264.6h0M1076.3 266.85h0M1085.3 266.85h0M1078.55 269.1h0M1080.8 269.1h0M1083.05 269.1h0M1088.35 255.6h0M1090.6 255.6h0M1092.85 255.6h0M1095.1 255.6h0M1097.35 255.6h0M1092.85 257.85h0M1092.85 260.1h0M1092.85 262.35h0M1092.85 264.6h0M1092.85 266.85h0M1092.85 269.1h0M1102.65 255.6h0M1104.9 255.6h0M1107.15 255.6h0M1100.4 257.85h0M1109.4 257.85h0M1100.4 260.1h0M1109.4 260.1h0M1100.4 262.35h0M1109.4 262.35h0M1100.4 264.6h0M1109.4 264.6h0M1100.4 266.85h0M1109.4 266.85h0M1102.65 269.1h0M1104.9 269.1h0M1107.15 269.1h0M1114.7 255.6h0M1116.95 257.85h0M1119.2 260.1h0M1119.2 262.35h0M1119.2 264.6h0M1116.95 266.85h0M1114.7 269.1h0M1277.65 255h0M1279.9 255h0M1282.15 255h0M1275.4 257.25h0M1284.4 257.25h0M1275.4 259.5h0M1284.4 259.5h0M1275.4 261.75h0M1284.4 261.75h0M1275.4 264h0M1277.65 264h0M1279.9 264h0M1282.15 264h0M1284.4 264h0M1275.4 266.25h0M1284.4 266.25h0M1275.4 268.5h0M1284.4 268.5h0M1287.45 255h0M1296.45 255h0M1287.45 257.25h0M1296.45 257.25h0M1287.45 259.5h0M1296.45 259.5h0M1287.45 261.75h0M1296.45 261.75h0M1287.45 264h0M1296.45 264h0M1287.45 266.25h0M1296.45 266.25h0M1289.7 268.5h0M1291.95 268.5h0M1294.2 268.5h0M1299.5 255h0M1301.75 255h0M1304 255h0M1306.25 255h0M1299.5 257.25h0M1308.5 257.25h0M1299.5 259.5h0M1308.5 259.5h0M1299.5 261.75h0M1308.5 261.75h0M1299.5 264h0M1308.5 264h0M1299.5 266.25h0M1308.5 266.25h0M1299.5 268.5h0M1301.75 268.5h0M1304 268.5h0M1306.25 268.5h0M1313.8 255h0M1316.05 255h0M1318.3 255h0M1316.05 257.25h0M1316.05 259.5h0M1316.05 261.75h0M1316.05 264h0M1316.05 266.25h0M1313.8 268.5h0M1316.05 268.5h0M1318.3 268.5h0M1325.85 255h0M1328.1 255h0M1330.35 255h0M1323.6 257.25h0M1332.6 257.25h0M1323.6 259.5h0M1332.6 259.5h0M1323.6 261.75h0M1332.6 261.75h0M1323.6 264h0M1332.6 264h0M1323.6 266.25h0M1332.6 266.25h0M1325.85 268.5h0M1328.1 268.5h0M1330.35 268.5h0M1349.95 255h0M1352.2 255h0M1354.45 255h0M1356.7 255h0M1347.7 257.25h0M1347.7 259.5h0M1349.95 261.75h0M1352.2 261.75h0M1354.45 261.75h0M1356.7 264h0M1356.7 266.25h0M1347.7 268.5h0M1349.95 268.5h0M1352.2 268.5h0M1354.45 268.5h0M1359.75 255h0M1362 255h0M1364.25 255h0M1366.5 255h0M1368.75 255h0M1359.75 257.25h0M1359.75 259.5h0M1359.75 261.75h0M1362 261.75h0M1364.25 261.75h0M1366.5 261.75h0M1359.75 264h0M1359.75 266.25h0M1359.75 268.5h0M1362 268.5h0M1364.25 268.5h0M1366.5 268.5h0M1368.75 268.5h0M1371.8 255h0M1371.8 257.25h0M1371.8 259.5h0M1371.8 261.75h0M1371.8 264h0M1371.8 266.25h0M1371.8 268.5h0M1374.05 268.5h0M1376.3 268.5h0M1378.55 268.5h0M1380.8 268.5h0M1383.85 255h0M1386.1 255h0M1388.35 255h0M1390.6 255h0M1392.85 255h0M1383.85 257.25h0M1383.85 259.5h0M1383.85 261.75h0M1386.1 261.75h0M1388.35 261.75h0M1390.6 261.75h0M1383.85 264h0M1383.85 266.25h0M1383.85 268.5h0M1386.1 268.5h0M1388.35 268.5h0M1390.6 268.5h0M1392.85 268.5h0M1398.15 255h0M1400.4 255h0M1402.65 255h0M1395.9 257.25h0M1404.9 257.25h0M1395.9 259.5h0M1395.9 261.75h0M1395.9 264h0M1395.9 266.25h0M1404.9 266.25h0M1398.15 268.5h0M1400.4 268.5h0M1402.65 268.5h0M1407.95 255h0M1410.2 255h0M1412.45 255h0M1414.7 255h0M1416.95 255h0M1412.45 257.25h0M1412.45 259.5h0M1412.45 261.75h0M1412.45 264h0M1412.45 266.25h0M1412.45 268.5h0M1422.25 255h0M1424.5 255h0M1426.75 255h0M1420 257.25h0M1429 257.25h0M1420 259.5h0M1429 259.5h0M1420 261.75h0M1429 261.75h0M1420 264h0M1429 264h0M1420 266.25h0M1429 266.25h0M1422.25 268.5h0M1424.5 268.5h0M1426.75 268.5h0M1432.05 255h0M1434.3 255h0M1436.55 255h0M1438.8 255h0M1432.05 257.25h0M1441.05 257.25h0M1432.05 259.5h0M1441.05 259.5h0M1432.05 261.75h0M1434.3 261.75h0M1436.55 261.75h0M1438.8 261.75h0M1432.05 264h0M1436.55 264h0M1432.05 266.25h0M1438.8 266.25h0M1432.05 268.5h0M1441.05 268.5h0M1458.4 255h0M1460.65 255h0M1462.9 255h0M1456.15 257.25h0M1465.15 257.25h0M1456.15 259.5h0M1465.15 259.5h0M1456.15 261.75h0M1465.15 261.75h0M1456.15 264h0M1465.15 264h0M1456.15 266.25h0M1465.15 266.25h0M1458.4 268.5h0M1460.65 268.5h0M1462.9 268.5h0M1468.2 255h0M1477.2 255h0M1468.2 257.25h0M1477.2 257.25h0M1468.2 259.5h0M1477.2 259.5h0M1468.2 261.75h0M1477.2 261.75h0M1468.2 264h0M1477.2 264h0M1468.2 266.25h0M1477.2 266.25h0M1470.45 268.5h0M1472.7 268.5h0M1474.95 268.5h0M1480.25 255h0M1482.5 255h0M1484.75 255h0M1487 255h0M1489.25 255h0M1484.75 257.25h0M1484.75 259.5h0M1484.75 261.75h0M1484.75 264h0M1484.75 266.25h0M1484.75 268.5h0M423.65 312.3h0M425.9 312.3h0M428.15 312.3h0M421.4 314.55h0M430.4 314.55h0M421.4 316.8h0M430.4 316.8h0M421.4 319.05h0M430.4 319.05h0M421.4 321.3h0M423.65 321.3h0M425.9 321.3h0M428.15 321.3h0M430.4 321.3h0M421.4 323.55h0M430.4 323.55h0M421.4 325.8h0M430.4 325.8h0M433.45 312.3h0M442.45 312.3h0M433.45 314.55h0M442.45 314.55h0M433.45 316.8h0M442.45 316.8h0M433.45 319.05h0M442.45 319.05h0M433.45 321.3h0M442.45 321.3h0M433.45 323.55h0M442.45 323.55h0M435.7 325.8h0M437.95 325.8h0M440.2 325.8h0M445.5 312.3h0M447.75 312.3h0M450 312.3h0M452.25 312.3h0M445.5 314.55h0M454.5 314.55h0M445.5 316.8h0M454.5 316.8h0M445.5 319.05h0M454.5 319.05h0M445.5 321.3h0M454.5 321.3h0M445.5 323.55h0M454.5 323.55h0M445.5 325.8h0M447.75 325.8h0M450 325.8h0M452.25 325.8h0M459.8 312.3h0M462.05 312.3h0M464.3 312.3h0M462.05 314.55h0M462.05 316.8h0M462.05 319.05h0M462.05 321.3h0M462.05 323.55h0M459.8 325.8h0M462.05 325.8h0M464.3 325.8h0M471.85 312.3h0M474.1 312.3h0M476.35 312.3h0M469.6 314.55h0M478.6 314.55h0M469.6 316.8h0M478.6 316.8h0M469.6 319.05h0M478.6 319.05h0M469.6 321.3h0M478.6 321.3h0M469.6 323.55h0M478.6 323.55h0M471.85 325.8h0M474.1 325.8h0M476.35 325.8h0M495.95 312.3h0M498.2 312.3h0M500.45 312.3h0M493.7 314.55h0M502.7 314.55h0M493.7 316.8h0M493.7 319.05h0M493.7 321.3h0M493.7 323.55h0M502.7 323.55h0M495.95 325.8h0M498.2 325.8h0M500.45 325.8h0M505.75 312.3h0M514.75 312.3h0M505.75 314.55h0M514.75 314.55h0M505.75 316.8h0M514.75 316.8h0M505.75 319.05h0M508 319.05h0M510.25 319.05h0M512.5 319.05h0M514.75 319.05h0M505.75 321.3h0M514.75 321.3h0M505.75 323.55h0M514.75 323.55h0M505.75 325.8h0M514.75 325.8h0M520.05 312.3h0M522.3 312.3h0M524.55 312.3h0M517.8 314.55h0M526.8 314.55h0M517.8 316.8h0M526.8 316.8h0M517.8 319.05h0M526.8 319.05h0M517.8 321.3h0M520.05 321.3h0M522.3 321.3h0M524.55 321.3h0M526.8 321.3h0M517.8 323.55h0M526.8 323.55h0M517.8 325.8h0M526.8 325.8h0M529.85 312.3h0M538.85 312.3h0M529.85 314.55h0M538.85 314.55h0M529.85 316.8h0M532.1 316.8h0M538.85 316.8h0M529.85 319.05h0M534.35 319.05h0M538.85 319.05h0M529.85 321.3h0M536.6 321.3h0M538.85 321.3h0M529.85 323.55h0M538.85 323.55h0M529.85 325.8h0M538.85 325.8h0M544.15 312.3h0M546.4 312.3h0M548.65 312.3h0M541.9 314.55h0M550.9 314.55h0M541.9 316.8h0M541.9 319.05h0M546.4 319.05h0M548.65 319.05h0M550.9 319.05h0M541.9 321.3h0M550.9 321.3h0M541.9 323.55h0M550.9 323.55h0M544.15 325.8h0M546.4 325.8h0M548.65 325.8h0M550.9 325.8h0M553.95 312.3h0M556.2 312.3h0M558.45 312.3h0M560.7 312.3h0M562.95 312.3h0M553.95 314.55h0M553.95 316.8h0M553.95 319.05h0M556.2 319.05h0M558.45 319.05h0M560.7 319.05h0M553.95 321.3h0M553.95 323.55h0M553.95 325.8h0M556.2 325.8h0M558.45 325.8h0M560.7 325.8h0M562.95 325.8h0M568.25 312.3h0M570.5 312.3h0M572.75 312.3h0M566 314.55h0M575 314.55h0M566 316.8h0M575 316.8h0M566 319.05h0M575 319.05h0M566 321.3h0M575 321.3h0M566 323.55h0M575 323.55h0M568.25 325.8h0M570.5 325.8h0M572.75 325.8h0M578.05 312.3h0M587.05 312.3h0M578.05 314.55h0M587.05 314.55h0M578.05 316.8h0M587.05 316.8h0M578.05 319.05h0M587.05 319.05h0M578.05 321.3h0M587.05 321.3h0M580.3 323.55h0M584.8 323.55h0M582.55 325.8h0M590.1 312.3h0M592.35 312.3h0M594.6 312.3h0M596.85 312.3h0M599.1 312.3h0M590.1 314.55h0M590.1 316.8h0M590.1 319.05h0M592.35 319.05h0M594.6 319.05h0M596.85 319.05h0M590.1 321.3h0M590.1 323.55h0M590.1 325.8h0M592.35 325.8h0M594.6 325.8h0M596.85 325.8h0M599.1 325.8h0M602.15 312.3h0M604.4 312.3h0M606.65 312.3h0M608.9 312.3h0M602.15 314.55h0M611.15 314.55h0M602.15 316.8h0M611.15 316.8h0M602.15 319.05h0M604.4 319.05h0M606.65 319.05h0M608.9 319.05h0M602.15 321.3h0M606.65 321.3h0M602.15 323.55h0M608.9 323.55h0M602.15 325.8h0M611.15 325.8h0M677.25 312.3h0M679.5 312.3h0M681.75 312.3h0M675 314.55h0M684 314.55h0M675 316.8h0M684 316.8h0M675 319.05h0M684 319.05h0M675 321.3h0M677.25 321.3h0M679.5 321.3h0M681.75 321.3h0M684 321.3h0M675 323.55h0M684 323.55h0M675 325.8h0M684 325.8h0M687.05 312.3h0M696.05 312.3h0M687.05 314.55h0M696.05 314.55h0M687.05 316.8h0M696.05 316.8h0M687.05 319.05h0M696.05 319.05h0M687.05 321.3h0M696.05 321.3h0M687.05 323.55h0M696.05 323.55h0M689.3 325.8h0M691.55 325.8h0M693.8 325.8h0M699.1 312.3h0M701.35 312.3h0M703.6 312.3h0M705.85 312.3h0M699.1 314.55h0M708.1 314.55h0M699.1 316.8h0M708.1 316.8h0M699.1 319.05h0M708.1 319.05h0M699.1 321.3h0M708.1 321.3h0M699.1 323.55h0M708.1 323.55h0M699.1 325.8h0M701.35 325.8h0M703.6 325.8h0M705.85 325.8h0M713.4 312.3h0M715.65 312.3h0M717.9 312.3h0M715.65 314.55h0M715.65 316.8h0M715.65 319.05h0M715.65 321.3h0M715.65 323.55h0M713.4 325.8h0M715.65 325.8h0M717.9 325.8h0M725.45 312.3h0M727.7 312.3h0M729.95 312.3h0M723.2 314.55h0M732.2 314.55h0M723.2 316.8h0M732.2 316.8h0M723.2 319.05h0M732.2 319.05h0M723.2 321.3h0M732.2 321.3h0M723.2 323.55h0M732.2 323.55h0M725.45 325.8h0M727.7 325.8h0M729.95 325.8h0M737.5 312.3h0M739.75 312.3h0M742 312.3h0M735.25 314.55h0M744.25 314.55h0M735.25 316.8h0M735.25 319.05h0M735.25 321.3h0M735.25 323.55h0M744.25 323.55h0M737.5 325.8h0M739.75 325.8h0M742 325.8h0M747.3 312.3h0M756.3 312.3h0M747.3 314.55h0M756.3 314.55h0M747.3 316.8h0M756.3 316.8h0M747.3 319.05h0M749.55 319.05h0M751.8 319.05h0M754.05 319.05h0M756.3 319.05h0M747.3 321.3h0M756.3 321.3h0M747.3 323.55h0M756.3 323.55h0M747.3 325.8h0M756.3 325.8h0M807.45 312.3h0M809.7 312.3h0M811.95 312.3h0M805.2 314.55h0M814.2 314.55h0M805.2 316.8h0M814.2 316.8h0M805.2 319.05h0M814.2 319.05h0M805.2 321.3h0M807.45 321.3h0M809.7 321.3h0M811.95 321.3h0M814.2 321.3h0M805.2 323.55h0M814.2 323.55h0M805.2 325.8h0M814.2 325.8h0M817.25 312.3h0M826.25 312.3h0M817.25 314.55h0M826.25 314.55h0M817.25 316.8h0M826.25 316.8h0M817.25 319.05h0M826.25 319.05h0M817.25 321.3h0M826.25 321.3h0M817.25 323.55h0M826.25 323.55h0M819.5 325.8h0M821.75 325.8h0M824 325.8h0M829.3 312.3h0M831.55 312.3h0M833.8 312.3h0M836.05 312.3h0M829.3 314.55h0M838.3 314.55h0M829.3 316.8h0M838.3 316.8h0M829.3 319.05h0M838.3 319.05h0M829.3 321.3h0M838.3 321.3h0M829.3 323.55h0M838.3 323.55h0M829.3 325.8h0M831.55 325.8h0M833.8 325.8h0M836.05 325.8h0M843.6 312.3h0M845.85 312.3h0M848.1 312.3h0M845.85 314.55h0M845.85 316.8h0M845.85 319.05h0M845.85 321.3h0M845.85 323.55h0M843.6 325.8h0M845.85 325.8h0M848.1 325.8h0M855.65 312.3h0M857.9 312.3h0M860.15 312.3h0M853.4 314.55h0M862.4 314.55h0M853.4 316.8h0M862.4 316.8h0M853.4 319.05h0M862.4 319.05h0M853.4 321.3h0M862.4 321.3h0M853.4 323.55h0M862.4 323.55h0M855.65 325.8h0M857.9 325.8h0M860.15 325.8h0M867.7 312.3h0M869.95 312.3h0M872.2 312.3h0M865.45 314.55h0M874.45 314.55h0M865.45 316.8h0M865.45 319.05h0M865.45 321.3h0M865.45 323.55h0M874.45 323.55h0M867.7 325.8h0M869.95 325.8h0M872.2 325.8h0M877.5 312.3h0M886.5 312.3h0M877.5 314.55h0M886.5 314.55h0M877.5 316.8h0M886.5 316.8h0M877.5 319.05h0M879.75 319.05h0M882 319.05h0M884.25 319.05h0M886.5 319.05h0M877.5 321.3h0M886.5 321.3h0M877.5 323.55h0M886.5 323.55h0M877.5 325.8h0M886.5 325.8h0M1346.4 312.2h0M1348.65 312.2h0M1350.9 312.2h0M1353.15 312.2h0M1346.4 314.45h0M1355.4 314.45h0M1346.4 316.7h0M1355.4 316.7h0M1346.4 318.95h0M1355.4 318.95h0M1346.4 321.2h0M1355.4 321.2h0M1346.4 323.45h0M1355.4 323.45h0M1346.4 325.7h0M1348.65 325.7h0M1350.9 325.7h0M1353.15 325.7h0M1360.7 312.2h0M1362.95 312.2h0M1365.2 312.2h0M1362.95 314.45h0M1362.95 316.7h0M1362.95 318.95h0M1362.95 321.2h0M1362.95 323.45h0M1360.7 325.7h0M1362.95 325.7h0M1365.2 325.7h0M1372.75 312.2h0M1375 312.2h0M1377.25 312.2h0M1379.5 312.2h0M1370.5 314.45h0M1370.5 316.7h0M1372.75 318.95h0M1375 318.95h0M1377.25 318.95h0M1379.5 321.2h0M1379.5 323.45h0M1370.5 325.7h0M1372.75 325.7h0M1375 325.7h0M1377.25 325.7h0M1384.8 312.2h0M1387.05 312.2h0M1389.3 312.2h0M1382.55 314.45h0M1391.55 314.45h0M1382.55 316.7h0M1391.55 316.7h0M1382.55 318.95h0M1391.55 318.95h0M1382.55 321.2h0M1384.8 321.2h0M1387.05 321.2h0M1389.3 321.2h0M1391.55 321.2h0M1382.55 323.45h0M1391.55 323.45h0M1382.55 325.7h0M1391.55 325.7h0M1394.6 312.2h0M1396.85 312.2h0M1399.1 312.2h0M1401.35 312.2h0M1394.6 314.45h0M1403.6 314.45h0M1394.6 316.7h0M1403.6 316.7h0M1394.6 318.95h0M1396.85 318.95h0M1399.1 318.95h0M1401.35 318.95h0M1394.6 321.2h0M1403.6 321.2h0M1394.6 323.45h0M1403.6 323.45h0M1394.6 325.7h0M1396.85 325.7h0M1399.1 325.7h0M1401.35 325.7h0M1406.65 312.2h0M1406.65 314.45h0M1406.65 316.7h0M1406.65 318.95h0M1406.65 321.2h0M1406.65 323.45h0M1406.65 325.7h0M1408.9 325.7h0M1411.15 325.7h0M1413.4 325.7h0M1415.65 325.7h0M1418.7 312.2h0M1420.95 312.2h0M1423.2 312.2h0M1425.45 312.2h0M1427.7 312.2h0M1418.7 314.45h0M1418.7 316.7h0M1418.7 318.95h0M1420.95 318.95h0M1423.2 318.95h0M1425.45 318.95h0M1418.7 321.2h0M1418.7 323.45h0M1418.7 325.7h0M1420.95 325.7h0M1423.2 325.7h0M1425.45 325.7h0M1427.7 325.7h0M1430.75 312.2h0M1433 312.2h0M1435.25 312.2h0M1437.5 312.2h0M1430.75 314.45h0M1439.75 314.45h0M1430.75 316.7h0M1439.75 316.7h0M1430.75 318.95h0M1439.75 318.95h0M1430.75 321.2h0M1439.75 321.2h0M1430.75 323.45h0M1439.75 323.45h0M1430.75 325.7h0M1433 325.7h0M1435.25 325.7h0M1437.5 325.7h0M410.7 388.6h0M419.7 388.6h0M410.7 390.85h0M412.95 390.85h0M417.45 390.85h0M419.7 390.85h0M410.7 393.1h0M415.2 393.1h0M419.7 393.1h0M410.7 395.35h0M415.2 395.35h0M419.7 395.35h0M410.7 397.6h0M419.7 397.6h0M410.7 399.85h0M419.7 399.85h0M410.7 402.1h0M419.7 402.1h0M422.75 388.6h0M425 388.6h0M427.25 388.6h0M429.5 388.6h0M422.75 390.85h0M431.75 390.85h0M422.75 393.1h0M431.75 393.1h0M422.75 395.35h0M425 395.35h0M427.25 395.35h0M429.5 395.35h0M422.75 397.6h0M422.75 399.85h0M422.75 402.1h0M434.8 388.6h0M437.05 388.6h0M439.3 388.6h0M441.55 388.6h0M443.8 388.6h0M441.55 390.85h0M439.3 393.1h0M441.55 395.35h0M443.8 397.6h0M434.8 399.85h0M443.8 399.85h0M437.05 402.1h0M439.3 402.1h0M441.55 402.1h0M458.9 388.6h0M467.9 388.6h0M458.9 390.85h0M461.15 390.85h0M465.65 390.85h0M467.9 390.85h0M458.9 393.1h0M463.4 393.1h0M467.9 393.1h0M458.9 395.35h0M463.4 395.35h0M467.9 395.35h0M458.9 397.6h0M467.9 397.6h0M458.9 399.85h0M467.9 399.85h0M458.9 402.1h0M467.9 402.1h0M470.95 388.6h0M473.2 388.6h0M475.45 388.6h0M477.7 388.6h0M470.95 390.85h0M479.95 390.85h0M470.95 393.1h0M479.95 393.1h0M470.95 395.35h0M473.2 395.35h0M475.45 395.35h0M477.7 395.35h0M470.95 397.6h0M470.95 399.85h0M470.95 402.1h0M483 388.6h0M485.25 388.6h0M487.5 388.6h0M489.75 388.6h0M492 388.6h0M483 390.85h0M483 393.1h0M483 395.35h0M485.25 395.35h0M487.5 395.35h0M489.75 395.35h0M483 397.6h0M483 399.85h0M483 402.1h0M485.25 402.1h0M487.5 402.1h0M489.75 402.1h0M492 402.1h0M497.3 388.6h0M499.55 388.6h0M501.8 388.6h0M495.05 390.85h0M504.05 390.85h0M495.05 393.1h0M495.05 395.35h0M499.55 395.35h0M501.8 395.35h0M504.05 395.35h0M495.05 397.6h0M504.05 397.6h0M495.05 399.85h0M504.05 399.85h0M497.3 402.1h0M499.55 402.1h0M501.8 402.1h0M504.05 402.1h0M566.25 376.15h0M568.5 376.15h0M570.75 376.15h0M578.3 376.15h0M580.55 376.15h0M582.8 376.15h0M590.35 376.15h0M592.6 376.15h0M594.85 376.15h0M602.4 376.15h0M604.65 376.15h0M606.9 376.15h0M614.45 376.15h0M616.7 376.15h0M618.95 376.15h0M566.25 395.95h0M568.5 395.95h0M570.75 395.95h0M578.3 395.95h0M580.55 395.95h0M582.8 395.95h0M590.35 395.95h0M592.6 395.95h0M594.85 395.95h0M602.4 395.95h0M604.65 395.95h0M606.9 395.95h0M614.45 395.95h0M616.7 395.95h0M618.95 395.95h0M677.15 376.15h0M679.4 376.15h0M681.65 376.15h0M689.2 376.15h0M691.45 376.15h0M693.7 376.15h0M677.15 395.95h0M679.4 395.95h0M681.65 395.95h0M689.2 395.95h0M691.45 395.95h0M693.7 395.95h0M945.25 368.8h0M947.5 368.8h0M949.75 368.8h0M943 371.05h0M952 371.05h0M943 373.3h0M943 375.55h0M943 377.8h0M943 380.05h0M952 380.05h0M945.25 382.3h0M947.5 382.3h0M949.75 382.3h0M957.3 368.8h0M959.55 368.8h0M961.8 368.8h0M955.05 371.05h0M964.05 371.05h0M955.05 373.3h0M964.05 373.3h0M955.05 375.55h0M964.05 375.55h0M955.05 377.8h0M964.05 377.8h0M955.05 380.05h0M964.05 380.05h0M957.3 382.3h0M959.55 382.3h0M961.8 382.3h0M967.1 368.8h0M976.1 368.8h0M967.1 371.05h0M976.1 371.05h0M967.1 373.3h0M969.35 373.3h0M976.1 373.3h0M967.1 375.55h0M971.6 375.55h0M976.1 375.55h0M967.1 377.8h0M973.85 377.8h0M976.1 377.8h0M967.1 380.05h0M976.1 380.05h0M967.1 382.3h0M976.1 382.3h0M979.15 368.8h0M988.15 368.8h0M979.15 371.05h0M988.15 371.05h0M979.15 373.3h0M981.4 373.3h0M988.15 373.3h0M979.15 375.55h0M983.65 375.55h0M988.15 375.55h0M979.15 377.8h0M985.9 377.8h0M988.15 377.8h0M979.15 380.05h0M988.15 380.05h0M979.15 382.3h0M988.15 382.3h0M993.45 375.55h0M995.7 375.55h0M997.95 375.55h0M1005.5 368.8h0M1007.75 368.8h0M1010 368.8h0M1003.25 371.05h0M1012.25 371.05h0M1003.25 373.3h0M1012.25 373.3h0M1003.25 375.55h0M1012.25 375.55h0M1003.25 377.8h0M1012.25 377.8h0M1003.25 380.05h0M1012.25 380.05h0M1005.5 382.3h0M1007.75 382.3h0M1010 382.3h0M1015.3 368.8h0M1024.3 368.8h0M1015.3 371.05h0M1022.05 371.05h0M1015.3 373.3h0M1019.8 373.3h0M1015.3 375.55h0M1017.55 375.55h0M1015.3 377.8h0M1019.8 377.8h0M1015.3 380.05h0M1022.05 380.05h0M1015.3 382.3h0M1024.3 382.3h0M944.75 388.6h0M947 388.6h0M949.25 388.6h0M947 390.85h0M947 393.1h0M947 395.35h0M947 397.6h0M947 399.85h0M944.75 402.1h0M947 402.1h0M949.25 402.1h0M956.8 388.6h0M959.05 388.6h0M961.3 388.6h0M963.55 388.6h0M954.55 390.85h0M954.55 393.1h0M956.8 395.35h0M959.05 395.35h0M961.3 395.35h0M963.55 397.6h0M963.55 399.85h0M954.55 402.1h0M956.8 402.1h0M959.05 402.1h0M961.3 402.1h0M966.6 388.6h0M968.85 388.6h0M971.1 388.6h0M973.35 388.6h0M975.6 388.6h0M966.6 390.85h0M966.6 393.1h0M966.6 395.35h0M968.85 395.35h0M971.1 395.35h0M973.35 395.35h0M966.6 397.6h0M966.6 399.85h0M966.6 402.1h0M968.85 402.1h0M971.1 402.1h0M973.35 402.1h0M975.6 402.1h0M978.65 388.6h0M980.9 388.6h0M983.15 388.6h0M985.4 388.6h0M978.65 390.85h0M987.65 390.85h0M978.65 393.1h0M987.65 393.1h0M978.65 395.35h0M980.9 395.35h0M983.15 395.35h0M985.4 395.35h0M978.65 397.6h0M983.15 397.6h0M978.65 399.85h0M985.4 399.85h0M978.65 402.1h0M987.65 402.1h0M990.7 388.6h0M999.7 388.6h0M990.7 390.85h0M999.7 390.85h0M990.7 393.1h0M999.7 393.1h0M990.7 395.35h0M999.7 395.35h0M990.7 397.6h0M999.7 397.6h0M992.95 399.85h0M997.45 399.85h0M995.2 402.1h0M1002.75 388.6h0M1005 388.6h0M1007.25 388.6h0M1009.5 388.6h0M1011.75 388.6h0M1002.75 390.85h0M1002.75 393.1h0M1002.75 395.35h0M1005 395.35h0M1007.25 395.35h0M1009.5 395.35h0M1002.75 397.6h0M1002.75 399.85h0M1002.75 402.1h0M1005 402.1h0M1007.25 402.1h0M1009.5 402.1h0M1011.75 402.1h0M1014.8 388.6h0M1017.05 388.6h0M1019.3 388.6h0M1021.55 388.6h0M1014.8 390.85h0M1023.8 390.85h0M1014.8 393.1h0M1023.8 393.1h0M1014.8 395.35h0M1017.05 395.35h0M1019.3 395.35h0M1021.55 395.35h0M1014.8 397.6h0M1019.3 397.6h0M1014.8 399.85h0M1021.55 399.85h0M1014.8 402.1h0M1023.8 402.1h0M1069.6 368.8h0M1067.35 371.05h0M1069.6 371.05h0M1069.6 373.3h0M1069.6 375.55h0M1069.6 377.8h0M1069.6 380.05h0M1067.35 382.3h0M1069.6 382.3h0M1071.85 382.3h0M1079.4 368.8h0M1081.65 368.8h0M1083.9 368.8h0M1077.15 371.05h0M1086.15 371.05h0M1086.15 373.3h0M1083.9 375.55h0M1081.65 377.8h0M1079.4 380.05h0M1077.15 382.3h0M1079.4 382.3h0M1081.65 382.3h0M1083.9 382.3h0M1086.15 382.3h0M1091.45 368.8h0M1093.7 368.8h0M1095.95 368.8h0M1089.2 371.05h0M1098.2 371.05h0M1089.2 373.3h0M1098.2 373.3h0M1091.45 375.55h0M1093.7 375.55h0M1095.95 375.55h0M1089.2 377.8h0M1098.2 377.8h0M1089.2 380.05h0M1098.2 380.05h0M1091.45 382.3h0M1093.7 382.3h0M1095.95 382.3h0M1067.3 388.6h0M1076.3 388.6h0M1067.3 390.85h0M1069.55 390.85h0M1074.05 390.85h0M1076.3 390.85h0M1067.3 393.1h0M1071.8 393.1h0M1076.3 393.1h0M1067.3 395.35h0M1071.8 395.35h0M1076.3 395.35h0M1067.3 397.6h0M1076.3 397.6h0M1067.3 399.85h0M1076.3 399.85h0M1067.3 402.1h0M1076.3 402.1h0M1079.35 388.6h0M1081.6 388.6h0M1083.85 388.6h0M1086.1 388.6h0M1079.35 390.85h0M1088.35 390.85h0M1079.35 393.1h0M1088.35 393.1h0M1079.35 395.35h0M1081.6 395.35h0M1083.85 395.35h0M1086.1 395.35h0M1079.35 397.6h0M1079.35 399.85h0M1079.35 402.1h0M1091.4 388.6h0M1093.65 388.6h0M1095.9 388.6h0M1098.15 388.6h0M1100.4 388.6h0M1098.15 390.85h0M1095.9 393.1h0M1098.15 395.35h0M1100.4 397.6h0M1091.4 399.85h0M1100.4 399.85h0M1093.65 402.1h0M1095.9 402.1h0M1098.15 402.1h0M1240.3 369.1h0M1242.55 369.1h0M1244.8 369.1h0M1247.05 369.1h0M1240.3 371.35h0M1249.3 371.35h0M1240.3 373.6h0M1249.3 373.6h0M1240.3 375.85h0M1242.55 375.85h0M1244.8 375.85h0M1247.05 375.85h0M1240.3 378.1h0M1240.3 380.35h0M1240.3 382.6h0M1252.35 369.1h0M1252.35 371.35h0M1252.35 373.6h0M1252.35 375.85h0M1252.35 378.1h0M1252.35 380.35h0M1252.35 382.6h0M1254.6 382.6h0M1256.85 382.6h0M1259.1 382.6h0M1261.35 382.6h0M1266.65 369.1h0M1268.9 369.1h0M1271.15 369.1h0M1264.4 371.35h0M1273.4 371.35h0M1264.4 373.6h0M1273.4 373.6h0M1264.4 375.85h0M1273.4 375.85h0M1264.4 378.1h0M1266.65 378.1h0M1268.9 378.1h0M1271.15 378.1h0M1273.4 378.1h0M1264.4 380.35h0M1273.4 380.35h0M1264.4 382.6h0M1273.4 382.6h0M1276.45 369.1h0M1285.45 369.1h0M1276.45 371.35h0M1285.45 371.35h0M1276.45 373.6h0M1285.45 373.6h0M1278.7 375.85h0M1283.2 375.85h0M1280.95 378.1h0M1280.95 380.35h0M1280.95 382.6h0M1288.5 369.1h0M1290.75 369.1h0M1293 369.1h0M1295.25 369.1h0M1297.5 369.1h0M1288.5 371.35h0M1288.5 373.6h0M1288.5 375.85h0M1290.75 375.85h0M1293 375.85h0M1295.25 375.85h0M1288.5 378.1h0M1288.5 380.35h0M1288.5 382.6h0M1290.75 382.6h0M1293 382.6h0M1295.25 382.6h0M1297.5 382.6h0M1300.55 369.1h0M1302.8 369.1h0M1305.05 369.1h0M1307.3 369.1h0M1300.55 371.35h0M1309.55 371.35h0M1300.55 373.6h0M1309.55 373.6h0M1300.55 375.85h0M1302.8 375.85h0M1305.05 375.85h0M1307.3 375.85h0M1300.55 378.1h0M1305.05 378.1h0M1300.55 380.35h0M1307.3 380.35h0M1300.55 382.6h0M1309.55 382.6h0M1314.85 371.35h0M1317.1 371.35h0M1314.85 373.6h0M1317.1 373.6h0M1314.85 378.1h0M1317.1 378.1h0M1314.85 380.35h0M1317.1 380.35h0M1338.95 375.85h0M1341.2 375.85h0M1343.45 375.85h0M1351 375.85h0M1353.25 375.85h0M1355.5 375.85h0M1363.05 375.85h0M1365.3 375.85h0M1367.55 375.85h0M1375.1 375.85h0M1377.35 375.85h0M1379.6 375.85h0M1387.15 375.85h0M1389.4 375.85h0M1391.65 375.85h0M1399.2 375.85h0M1401.45 375.85h0M1403.7 375.85h0M1411.25 375.85h0M1413.5 375.85h0M1415.75 375.85h0M1423.3 375.85h0M1425.55 375.85h0M1427.8 375.85h0M1435.35 375.85h0M1437.6 375.85h0M1439.85 375.85h0" stroke="#f2f2f2" stroke-width="1.55" stroke-linecap="square"/></svg><div class="abs" style="left:363px;top:405.5px;width:1225px;height:2.5px;background:#12181c"></div><div class="abs" style="left:363px;top:408px;width:1225px;height:2px;background:#f4f4f4"></div><div class="abs" id="content"></div><div class="abs" style="left:363px;top:410px;width:14px;height:488px;background:linear-gradient(90deg,rgba(20,20,30,.47) 0px,rgba(20,20,30,.3) 3px,rgba(20,20,30,.15) 6px,rgba(20,20,30,.06) 9px,rgba(0,0,0,0) 13px)"></div><div class="abs" style="left:363px;top:410px;width:1225px;height:9px;background:linear-gradient(180deg,rgba(20,25,30,.62) 0px,rgba(20,25,30,.25) 3px,rgba(0,0,0,0) 8px)"></div><div class="abs" style="left:1555px;top:410px;width:33px;height:18px;background:#e4e4e4;border:1px solid #c8c8c8;border-top:none;border-radius:0 0 4px 4px"></div><svg class="abs" style="left:1566px;top:416px" width="10" height="6"><path d="M0 0h10L5 5z" fill="#555"/></svg><div class="abs" style="left:372px;top:421.5px;font-size:13.3px;color:#333;white-space:nowrap">Decoder 2 Settings <span style="font-size:10.2px;color:#777">( Multimedia &gt; Sources )</span></div><div class="abs card" style="left:389px;top:446px;width:1173px;height:109px"></div><div class="abs ctitle" style="left:400px;top:462px">Status</div><div class="abs fg" style="left:404.5px;top:491px;width:183.5px;height:47px"><div class="fl" style="height:24px;line-height:23px">Status</div><div class="fv" style="height:22px;line-height:23px">Available</div></div><div class="abs fg" style="left:596.5px;top:491px;width:183.5px;height:47px"><div class="fl" style="height:24px;line-height:23px">Protocol</div><div class="fv" style="height:22px;line-height:23px">--</div></div><div class="abs fg" style="left:788.5px;top:491px;width:183.5px;height:47px"><div class="fl" style="height:24px;line-height:23px">Encoder</div><div class="fv" style="height:22px;line-height:23px">MPEG-1 Layer 3 (MP3)</div></div><div class="abs fg" style="left:980px;top:491px;width:183.5px;height:47px"><div class="fl" style="height:24px;line-height:23px">BitRate</div><div class="fv" style="height:22px;line-height:23px">128kBits</div></div><div class="abs fg" style="left:1171.5px;top:491px;width:183.5px;height:47px"><div class="fl" style="height:24px;line-height:23px">Mode</div><div class="fv" style="height:22px;line-height:23px">Stereo</div></div><div class="abs fg" style="left:1363px;top:491px;width:183.5px;height:47px"><div class="fl" style="height:24px;line-height:23px">Freq</div><div class="fv" style="height:22px;line-height:23px">48 KHz</div></div><div class="abs card" style="left:389px;top:570px;width:1173px;height:171px"></div><div class="abs ctitle" style="left:400px;top:586px">Configuration</div><div class="abs fg" style="left:404.5px;top:614px;width:567px;height:47px"><div class="fl" style="height:26px;line-height:25px;border-bottom:2px solid #c2c2c2">Mode</div><div class="fv w" style="height:19px;line-height:22px;padding-left:9px;margin:0 1px;border-left:1px solid #e2e2e2;border-right:1px solid #e2e2e2">IcecastReceiver</div></div><svg class="abs" style="left:959.5px;top:647px" width="8" height="6"><path d="M0.8 0.8l3.2 3.2 3.2-3.2" fill="none" stroke="#222" stroke-width="1.5"/></svg><div class="abs fg" style="left:980px;top:614px;width:566.5px;height:47px"><div class="fl" style="height:26px;line-height:25px;border-bottom:2px solid #c2c2c2">Buffer (msec)</div><div class="fv w" style="height:19px;line-height:22px;padding-left:7px;margin:0 1px;border-left:1px solid #e2e2e2;border-right:1px solid #e2e2e2">3000</div></div><div class="abs fg" style="left:404.5px;top:676px;width:375.5px;height:47px"><div class="fl" style="height:26px;line-height:25px;border-bottom:2px solid #c2c2c2">Muticast RX Enable</div><div class="fv w" style="height:19px;line-height:22px;padding-left:9px;margin:0 1px;border-left:1px solid #e2e2e2;border-right:1px solid #e2e2e2">Disabled</div></div><svg class="abs" style="left:768.0px;top:709px" width="8" height="6"><path d="M0.8 0.8l3.2 3.2 3.2-3.2" fill="none" stroke="#222" stroke-width="1.5"/></svg><div class="abs fg" style="left:788.5px;top:676px;width:374px;height:47px"><div class="fl" style="height:26px;line-height:25px;border-bottom:2px solid #c2c2c2">Multicast Host Group</div><div class="fv w" style="height:19px;line-height:22px;padding-left:7px;margin:0 1px;border-left:1px solid #e2e2e2;border-right:1px solid #e2e2e2"></div></div><div class="abs fg" style="left:1171.5px;top:676px;width:375px;height:47px"><div class="fl" style="height:26px;line-height:25px;border-bottom:2px solid #c2c2c2">Output Gain (dB)</div><div class="fv w" style="height:19px;line-height:22px;padding-left:7px;margin:0 1px;border-left:1px solid #e2e2e2;border-right:1px solid #e2e2e2">-3.0</div></div><div class="abs card" style="left:389px;top:756px;width:583px;height:150px"></div><div class="abs card" style="left:980px;top:756px;width:582px;height:150px"></div><div class="abs ctitle" style="left:401px;top:772px">Transport Mode</div><div class="abs ctitle" style="left:990px;top:772px">Codec Settings</div><div class="abs" style="left:580px;top:807px;width:200px;text-align:center;font-size:10.5px;font-weight:bold;color:#111">RTP</div><div class="abs" style="left:1171px;top:807px;width:200px;text-align:center;font-size:10.5px;font-weight:bold;color:#111">RAW 16 BIT</div><div class="abs fg" style="left:404.5px;top:842px;width:553px;height:47px"><div class="fl" style="height:25px;line-height:24px;border-bottom:2px solid #c2c2c2">Port</div><div class="fv w" style="height:20px;line-height:22px;padding-left:7px;margin:0 1px;border-left:1px solid #e2e2e2;border-right:1px solid #e2e2e2">1</div></div><div class="abs fg" style="left:995px;top:842px;width:552px;height:47px"><div class="fl" style="height:25px;line-height:24px;border-bottom:2px solid #c2c2c2">Mode</div><div class="fv w" style="height:20px;line-height:22px;padding-left:9px;margin:0 1px;border-left:1px solid #e2e2e2;border-right:1px solid #e2e2e2">Stereo</div></div><svg class="abs" style="left:1535px;top:875px" width="8" height="6"><path d="M0.8 0.8l3.2 3.2 3.2-3.2" fill="none" stroke="#222" stroke-width="1.5"/></svg><div class="abs" style="left:178px;top:898px;width:1422px;height:102px;background:#fff"></div></body></html>
